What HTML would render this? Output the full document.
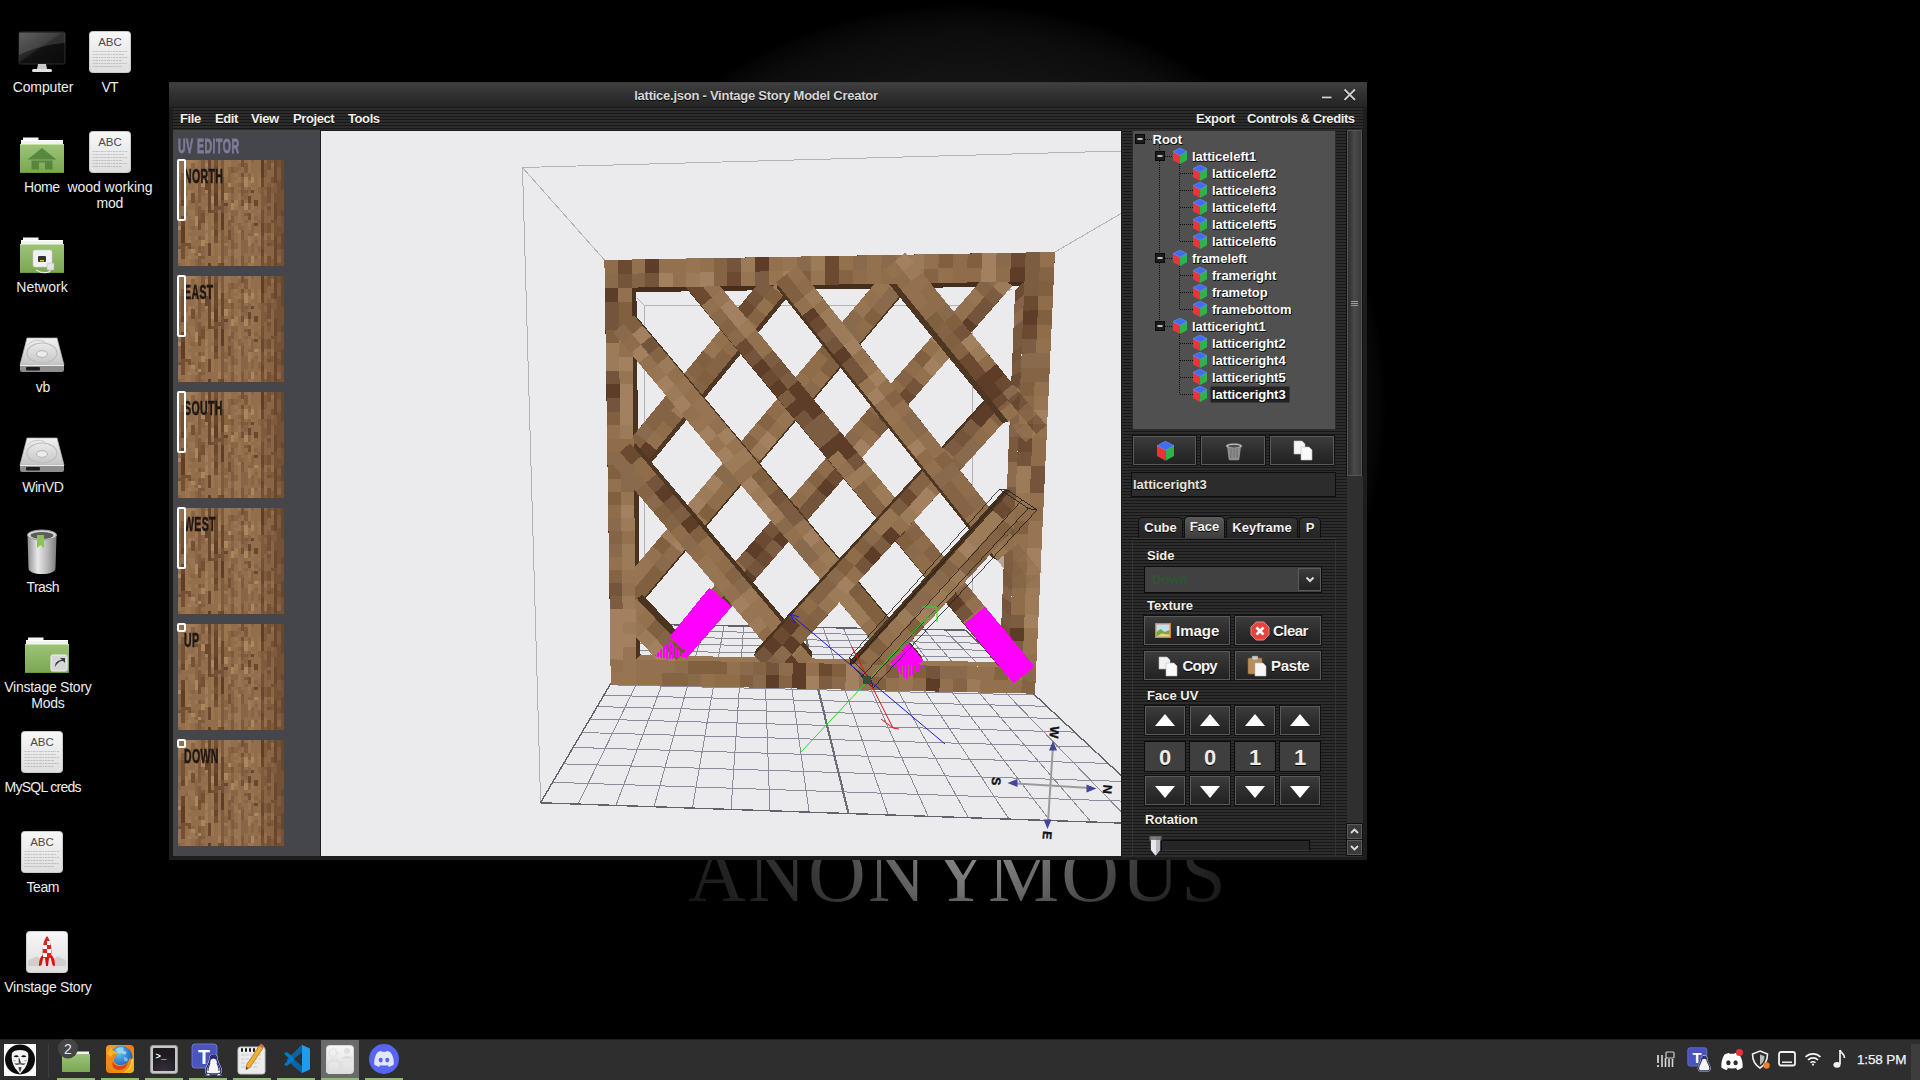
<!DOCTYPE html>
<html lang="en"><head><meta charset="utf-8"><title>lattice.json - Vintage Story Model Creator</title>
<style>
*{box-sizing:border-box;margin:0;padding:0}
html,body{width:1920px;height:1080px;overflow:hidden;background:#000;font-family:"Liberation Sans",sans-serif}
body{position:relative;font-family:"Liberation Sans",sans-serif;color:#fff}
.abs{position:absolute}
#wall{position:absolute;left:0;top:0;width:1920px;height:1039px;background:radial-gradient(ellipse 424px 400px at 963px 404px,#1f1f1f 0%,#181818 60%,#131313 82%,#0c0c0c 93%,#050505 98%,#000 100%)}
#anon{position:absolute;left:688px;top:829px;width:560px;height:90px;font-family:"Liberation Serif",serif;font-size:80px;line-height:90px;letter-spacing:2.2px;white-space:nowrap;
 background:linear-gradient(90deg,#1c1c1c 0%,#3a3a3a 22%,#777 42%,#8a8a8a 52%,#6a6a6a 66%,#2e2e2e 85%,#181818 100%);-webkit-background-clip:text;background-clip:text;color:transparent}
#anonfade{position:absolute;left:660px;top:858px;width:620px;height:60px;background:linear-gradient(180deg,rgba(0,0,0,0) 0%,rgba(0,0,0,.15) 60%,rgba(0,0,0,.55) 100%)}
/* desktop icons */
.dlabel{position:absolute;font-size:14px;line-height:16px;color:#ededed;text-align:center;white-space:nowrap;text-shadow:0 1px 2px #000;transform:translateX(-50%)}
/* window */
#win{position:absolute;left:169px;top:82px;width:1198px;height:778px;background:#1d1d1d}
#title{position:absolute;left:0;top:0;width:1198px;height:25px;background:linear-gradient(180deg,#404040 0%,#343434 35%,#242424 100%);border-top:1px solid #3a3a3a}
#title .t{position:absolute;left:0;width:1174px;top:4.5px;text-align:center;font-weight:bold;font-size:13px;line-height:16px;letter-spacing:-.25px;color:#d6d6d6;text-shadow:0 1px 0 #000}
#menubar{position:absolute;left:4px;top:25px;width:1190px;height:23px;background:repeating-linear-gradient(180deg,#171717 0,#171717 1px,#2c2c2c 1px,#2c2c2c 3px)}
.mi{position:absolute;top:4px;font-weight:bold;font-size:13px;line-height:16px;letter-spacing:-.4px;color:#f2efe8;text-shadow:0 1px 0 #000;white-space:nowrap}
#uv{position:absolute;left:4px;top:48px;width:147px;height:726px;background:#45464b}
#uvt{position:absolute;left:5px;top:4.500px;font-weight:bold;font-size:21px;line-height:22px;color:#7c7d9b;-webkit-text-stroke:.8px #7c7d9b;transform:scaleX(.5);transform-origin:0 0;white-space:nowrap;letter-spacing:1px}
.th{position:absolute;left:5px;width:106px;height:106px;background:#8a6a4c;overflow:hidden}
.thl{position:absolute;font-weight:bold;font-size:21px;line-height:20px;color:#1e1712;-webkit-text-stroke:.6px #1e1712;letter-spacing:.8px;transform:scaleX(.5);transform-origin:0 0;white-space:nowrap}
.sel{position:absolute;border:2px solid #fff;border-radius:2px}
#vp{position:absolute;left:152px;top:49px;width:800px;height:725px;background:#ebebed;overflow:hidden}
#rp{position:absolute;left:953px;top:48px;width:241px;height:727px;background:repeating-linear-gradient(180deg,#2c2c2c 0,#2c2c2c 1px,#171717 1px,#171717 2px,#2c2c2c 2px,#2c2c2c 3px);overflow:hidden}
#tree{position:absolute;left:10px;top:0px;width:204px;height:300px;background:#505050;border:1px solid #2c2c2c}
.tr{margin-top:1px;position:absolute;font-weight:bold;font-size:13px;line-height:17px;color:#fff;text-shadow:1px 1px 0 #111,0 1px 0 #111;white-space:nowrap}
.btn{position:absolute;border:1px solid #5a5a5a;background:linear-gradient(180deg,#3c3c3c 0%,#2c2c2c 55%,#222 100%);box-shadow:0 0 0 1px #111}
.lbl{margin-top:1px;position:absolute;font-weight:bold;font-size:13px;line-height:16px;color:#f4efe6;text-shadow:0 1px 0 #000;white-space:nowrap}
.tab{position:absolute;top:469px;height:22px;border:1px solid #0e0e0e;border-bottom:none;border-radius:5px 5px 0 0;background:linear-gradient(180deg,#333 0%,#242424 100%);font-weight:bold;font-size:13px;line-height:20px;text-align:center;color:#f2f2f2;text-shadow:0 1px 0 #000}
.tab.on{top:468px;height:23px;background:linear-gradient(180deg,#5a5a5a 0%,#3c3c3c 100%)}
.num{position:absolute;width:43px;height:32px;top:693px;background:#3f3f3f;border:1px solid #0c0c0c;font-weight:bold;font-size:22px;line-height:31px;text-align:center;color:#f0ece4;text-shadow:0 1px 0 #000}
/* taskbar */
#tb{position:absolute;left:0;top:1039px;width:1920px;height:41px;background:#2e2e2e;border-top:1px solid #1f1f1f}
.ul{position:absolute;top:38px;height:3px;background:#92ba70}
</style></head><body>
<div id="wall"></div>
<div id="anon">ANON<span style="margin-left:4px;margin-right:-4px">Y</span>MOUS</div><div id="anonfade"></div>
<svg width="0" height="0" style="position:absolute"><defs>
<linearGradient id="gDoc" x1="0" y1="0" x2="0" y2="1"><stop offset="0" stop-color="#f7f7f7"/><stop offset="1" stop-color="#dedede"/></linearGradient>
<linearGradient id="gFol" x1="0" y1="0" x2="0" y2="1"><stop offset="0" stop-color="#9dc479"/><stop offset="1" stop-color="#7aa651"/></linearGradient>
<linearGradient id="gMon" x1="0" y1="0" x2="1" y2="1"><stop offset="0" stop-color="#4a4a4a"/><stop offset=".45" stop-color="#262626"/><stop offset=".5" stop-color="#111"/><stop offset="1" stop-color="#0a0a0a"/></linearGradient>
<linearGradient id="gDrv" x1="0" y1="0" x2="0" y2="1"><stop offset="0" stop-color="#f2f2f2"/><stop offset="1" stop-color="#c4c4c4"/></linearGradient>
<linearGradient id="gCan" x1="0" y1="0" x2="1" y2="0"><stop offset="0" stop-color="#8c8c8c"/><stop offset=".35" stop-color="#e9e9e9"/><stop offset=".7" stop-color="#b5b5b5"/><stop offset="1" stop-color="#7a7a7a"/></linearGradient>
<symbol id="doc" viewBox="0 0 42 42"><rect x=".5" y=".5" width="41" height="41" rx="3" fill="url(#gDoc)" stroke="#c9c9c9"/>
<text x="21" y="14.5" font-family="Liberation Sans,sans-serif" font-size="11.5" fill="#4a4a4a" text-anchor="middle">ABC</text>
<g stroke="#8e8e8e" stroke-width=".7" stroke-dasharray="2 .7 3 .7 1.500 .7 2.500 .7" opacity=".6"><path d="M3.500 20.500h35M3.500 23.500h32M3.500 26.500h35M3.500 29.500h30M3.500 32.500h34M3.500 35.500h29"/></g></symbol>
<symbol id="fol" viewBox="0 0 46 38"><path d="M4 1.500h15.500v4H4z" fill="#f6f6f6"/><path d="M2 4.500h42v5H2z" fill="#f2f2f2"/><path d="M2 4.500h42" stroke="#fff" stroke-width="1"/><path d="M1 8h44v28a1 1 0 0 1-1 1H2a1 1 0 0 1-1-1z" fill="url(#gFol)"/><path d="M1 8.5h44" stroke="#c3e2a3" stroke-width="1"/><path d="M1 36.5h44" stroke="#699a42" stroke-width="1"/></symbol>
<symbol id="drv" viewBox="0 0 46 36"><path d="M8 1h30l7 27H1z" fill="url(#gDrv)" stroke="#b4b4b4" stroke-width=".7"/><ellipse cx="23" cy="16" rx="15" ry="10" fill="none" stroke="#bdbdbd" stroke-width="1.200"/><ellipse cx="23" cy="17" rx="5.500" ry="3.300" fill="#ececec" stroke="#b5b5b5"/><path d="M9 8c3-5 12-6 17-3" fill="none" stroke="#c6c6c6"/><path d="M1 28h44v5a2 2 0 0 1-2 2H3a2 2 0 0 1-2-2z" fill="#8e8e8e"/><rect x="7" y="30" width="14" height="3.500" rx="1" fill="#1c1c1c"/><path d="M1 28.500h44" stroke="#eee"/></symbol>
</defs></svg>
<!-- Computer -->
<svg class="abs" style="left:18px;top:31px" width="48" height="43" viewBox="0 0 48 43"><rect x="1" y="1" width="46" height="32" rx="1.5" fill="url(#gMon)" stroke="#2e2e2e"/><path d="M1 2L47 2L47 12C30 13 14 18 1 24Z" fill="#fff" opacity=".13"/><path d="M20 33h8l1 5h-10z" fill="#c9c9c9"/><rect x="14" y="38" width="20" height="3" rx="1.5" fill="#e2e2e2"/></svg>
<div class="dlabel" style="left:43px;top:79px"><span style="letter-spacing:-0.12px;margin-right:0.12px">Computer</span></div>
<svg class="abs" style="left:89px;top:31px" width="42" height="42"><use href="#doc"/></svg>
<div class="dlabel" style="left:110px;top:79px"><span style="letter-spacing:-0.94px;margin-right:0.94px">VT</span></div>
<!-- Home -->
<svg class="abs" style="left:19px;top:136px" width="46" height="38" viewBox="0 0 46 38"><use href="#fol"/><path d="M23 12L8.500 23.500h29z" fill="#4f7f3a" opacity=".85"/><path d="M12.500 24.500h21v9h-7.500v-7h-6v7h-7.500z" fill="#4f7f3a" opacity=".85"/></svg>
<div class="dlabel" style="left:42px;top:179px"><span style="letter-spacing:-0.40px;margin-right:0.40px">Home</span></div>
<svg class="abs" style="left:89px;top:131px" width="42" height="42"><use href="#doc"/></svg>
<div class="dlabel" style="left:110px;top:179px"><span style="letter-spacing:-0.05px;margin-right:0.05px">wood working</span><br><span style="letter-spacing:-0.24px;margin-right:0.24px">mod</span></div>
<!-- Network -->
<svg class="abs" style="left:19px;top:236px" width="46" height="38" viewBox="0 0 46 38"><use href="#fol"/><rect x="14" y="14" width="19" height="17" rx="2" fill="#f1f1f1" stroke="#cfcfcf" stroke-width=".6"/><rect x="19" y="20" width="8" height="6" rx="1" fill="#333"/><rect x="21" y="24" width="4" height="1.4" fill="#e9c94a"/><rect x="28" y="27" width="7" height="7" rx="1" fill="#e4e4e4" stroke="#b5b5b5" stroke-width=".5"/><path d="M31 34c1 3-8 4-14 0" stroke="#e6e6e6" fill="none" stroke-width="1.300"/></svg>
<div class="dlabel" style="left:42px;top:279px"><span style="letter-spacing:-0.01px;margin-right:0.01px">Network</span></div>
<svg class="abs" style="left:19px;top:337px" width="46" height="36"><use href="#drv"/></svg>
<div class="dlabel" style="left:43px;top:379px"><span style="letter-spacing:-0.27px;margin-right:0.27px">vb</span></div>
<svg class="abs" style="left:19px;top:437px" width="46" height="36"><use href="#drv"/></svg>
<div class="dlabel" style="left:43px;top:479px"><span style="letter-spacing:-0.46px;margin-right:0.46px">WinVD</span></div>
<!-- Trash -->
<svg class="abs" style="left:26px;top:529px" width="32" height="46" viewBox="0 0 32 46"><path d="M1.500 6h29l-1 33c0 4-6 6-13.500 6S2.500 43 2.500 39z" fill="url(#gCan)"/><ellipse cx="16" cy="6" rx="14.5" ry="5" fill="#d9d9d9" stroke="#9a9a9a"/><ellipse cx="16" cy="6.5" rx="11.5" ry="3.4" fill="#5c5c5c"/><path d="M11 6h7v13l-3.5-3L11 19z" fill="#8ec252"/></svg>
<div class="dlabel" style="left:43px;top:579px"><span style="letter-spacing:-0.55px;margin-right:0.55px">Trash</span></div>
<!-- Vinstage Story Mods -->
<svg class="abs" style="left:24px;top:636px" width="46" height="38" viewBox="0 0 46 38"><use href="#fol"/><rect x="27" y="19" width="16" height="16" rx="1.5" fill="#d7d7d7" stroke="#f3f3f3"/><path d="M31 31c0-5 3-7 7-7l-2-2h5v5l-2-2c-3 0-5 1-8 6z" fill="#3c3c3c"/></svg>
<div class="dlabel" style="left:48px;top:679px"><span style="letter-spacing:-0.24px;margin-right:0.24px">Vinstage Story</span><br><span style="letter-spacing:-0.25px;margin-right:0.25px">Mods</span></div>
<svg class="abs" style="left:21px;top:731px" width="42" height="42"><use href="#doc"/></svg>
<div class="dlabel" style="left:43px;top:779px"><span style="letter-spacing:-0.73px;margin-right:0.73px">MySQL creds</span></div>
<svg class="abs" style="left:21px;top:831px" width="42" height="42"><use href="#doc"/></svg>
<div class="dlabel" style="left:43px;top:879px"><span style="letter-spacing:-0.43px;margin-right:0.43px">Team</span></div>
<!-- Vinstage Story rocket -->
<svg class="abs" style="left:26px;top:931px" width="42" height="42" viewBox="0 0 42 42"><rect x=".5" y=".5" width="41" height="41" rx="3" fill="url(#gDoc)" stroke="#cfcfcf"/><path d="M2 30c3-4 6-2 8-5 2 1 3 3 5 2v8H2zM40 30c-3-4-6-2-8-5-2 1-3 3-5 2v8h13z" fill="#c9c9c9" opacity=".8"/><path d="M21 5c4 5 5 12 4 22h-8c-1-10 0-17 4-22z" fill="#e01e1e"/><path d="M17 14h4v4h-4zM21 18h4v4h-4zM17 22h4v4h-4zM21 10h3.5v4H21z" fill="#fff"/><path d="M17 24c-3 2-4 6-4 11 2 0 3-1 3-3l1-4zM25 24c3 2 4 6 4 11-2 0-3-1-3-3l-1-4z" fill="#d11"/><path d="M19 27h4l-1 8h-2z" fill="#c11"/></svg>
<div class="dlabel" style="left:48px;top:979px"><span style="letter-spacing:-0.24px;margin-right:0.24px">Vinstage Story</span></div>
<div id="win">
<div id="title"><div class="t">lattice.json - Vintage Story Model Creator</div>
<svg class="abs" style="left:1148px;top:3px" width="44" height="18" viewBox="0 0 44 18"><path d="M5 12.500h9.500" stroke="#0c0c0c" stroke-width="2"/><path d="M5 11.500h9.500" stroke="#d2d2d2" stroke-width="1.800"/><path d="M27.500 4.500l10.500 10.500M38 4.500L27.500 15" stroke="#0c0c0c" stroke-width="2"/><path d="M27.500 3.500l10.500 10.500M38 3.500L27.500 14" stroke="#cdcdcd" stroke-width="1.900"/></svg></div>
<div id="menubar">
<div class="mi" style="left:7px">File</div><div class="mi" style="left:42px">Edit</div><div class="mi" style="left:78px">View</div><div class="mi" style="left:120px">Project</div><div class="mi" style="left:175px">Tools</div>
<div class="mi" style="left:1023px">Export</div><div class="mi" style="left:1074px">Controls &amp; Credits</div>
</div>
<div id="uv"><div id="uvt">UV EDITOR</div>
<svg width="0" height="0" style="position:absolute"><defs><symbol id="wood" viewBox="0 0 32 32"><rect x="0" y="0" width="1.03" height="3.03" fill="#9b7551"/><rect x="0" y="3" width="1.03" height="1.03" fill="#9b7551"/><rect x="0" y="4" width="1.03" height="1.03" fill="#9b7551"/><rect x="0" y="5" width="1.03" height="1.03" fill="#936e4c"/><rect x="0" y="6" width="1.03" height="3.03" fill="#8a6545"/><rect x="0" y="9" width="1.03" height="2.03" fill="#8a6545"/><rect x="0" y="11" width="1.03" height="2.03" fill="#936e4c"/><rect x="0" y="13" width="1.03" height="1.03" fill="#8a6545"/><rect x="0" y="14" width="1.03" height="1.03" fill="#8a6545"/><rect x="0" y="15" width="1.03" height="3.03" fill="#936e4c"/><rect x="0" y="18" width="1.03" height="1.03" fill="#9b7551"/><rect x="0" y="19" width="1.03" height="1.03" fill="#936e4c"/><rect x="0" y="20" width="1.03" height="1.03" fill="#ac865e"/><rect x="0" y="21" width="1.03" height="1.03" fill="#8a6545"/><rect x="0" y="22" width="1.03" height="3.03" fill="#8a6545"/><rect x="0" y="25" width="1.03" height="1.03" fill="#8a6545"/><rect x="0" y="26" width="1.03" height="1.03" fill="#745035"/><rect x="0" y="27" width="1.03" height="2.03" fill="#9b7551"/><rect x="0" y="29" width="1.03" height="2.03" fill="#9b7551"/><rect x="0" y="31" width="1.03" height="1.03" fill="#8a6545"/><rect x="1" y="0" width="1.03" height="4.03" fill="#936e4c"/><rect x="1" y="4" width="1.03" height="2.03" fill="#7f5a3d"/><rect x="1" y="6" width="1.03" height="3.03" fill="#745035"/><rect x="1" y="9" width="1.03" height="3.03" fill="#745035"/><rect x="1" y="12" width="1.03" height="2.03" fill="#69472d"/><rect x="1" y="14" width="1.03" height="3.03" fill="#936e4c"/><rect x="1" y="17" width="1.03" height="3.03" fill="#69472d"/><rect x="1" y="20" width="1.03" height="5.03" fill="#5f3e26"/><rect x="1" y="25" width="1.03" height="5.03" fill="#745035"/><rect x="1" y="30" width="1.03" height="2.03" fill="#936e4c"/><rect x="2" y="0" width="1.03" height="1.03" fill="#a37d57"/><rect x="2" y="1" width="1.03" height="1.03" fill="#a37d57"/><rect x="2" y="2" width="1.03" height="1.03" fill="#9b7551"/><rect x="2" y="3" width="1.03" height="2.03" fill="#936e4c"/><rect x="2" y="5" width="1.03" height="1.03" fill="#9b7551"/><rect x="2" y="6" width="1.03" height="2.03" fill="#9b7551"/><rect x="2" y="8" width="1.03" height="2.03" fill="#936e4c"/><rect x="2" y="10" width="1.03" height="1.03" fill="#936e4c"/><rect x="2" y="11" width="1.03" height="3.03" fill="#a37d57"/><rect x="2" y="14" width="1.03" height="2.03" fill="#936e4c"/><rect x="2" y="16" width="1.03" height="1.03" fill="#8a6545"/><rect x="2" y="17" width="1.03" height="2.03" fill="#9b7551"/><rect x="2" y="19" width="1.03" height="3.03" fill="#9b7551"/><rect x="2" y="22" width="1.03" height="3.03" fill="#9b7551"/><rect x="2" y="25" width="1.03" height="1.03" fill="#745035"/><rect x="2" y="26" width="1.03" height="3.03" fill="#936e4c"/><rect x="2" y="29" width="1.03" height="3.03" fill="#9b7551"/><rect x="3" y="0" width="1.03" height="1.03" fill="#a37d57"/><rect x="3" y="1" width="1.03" height="2.03" fill="#a37d57"/><rect x="3" y="3" width="1.03" height="2.03" fill="#a37d57"/><rect x="3" y="5" width="1.03" height="2.03" fill="#936e4c"/><rect x="3" y="7" width="1.03" height="2.03" fill="#936e4c"/><rect x="3" y="9" width="1.03" height="3.03" fill="#a37d57"/><rect x="3" y="12" width="1.03" height="3.03" fill="#936e4c"/><rect x="3" y="15" width="1.03" height="2.03" fill="#9b7551"/><rect x="3" y="17" width="1.03" height="3.03" fill="#936e4c"/><rect x="3" y="20" width="1.03" height="1.03" fill="#936e4c"/><rect x="3" y="21" width="1.03" height="1.03" fill="#9b7551"/><rect x="3" y="22" width="1.03" height="1.03" fill="#936e4c"/><rect x="3" y="23" width="1.03" height="1.03" fill="#9b7551"/><rect x="3" y="24" width="1.03" height="1.03" fill="#a37d57"/><rect x="3" y="25" width="1.03" height="2.03" fill="#745035"/><rect x="3" y="27" width="1.03" height="2.03" fill="#9b7551"/><rect x="3" y="29" width="1.03" height="1.03" fill="#a37d57"/><rect x="3" y="30" width="1.03" height="2.03" fill="#9b7551"/><rect x="4" y="0" width="1.03" height="1.03" fill="#a37d57"/><rect x="4" y="1" width="1.03" height="3.03" fill="#8a6545"/><rect x="4" y="4" width="1.03" height="2.03" fill="#9b7551"/><rect x="4" y="6" width="1.03" height="2.03" fill="#936e4c"/><rect x="4" y="8" width="1.03" height="1.03" fill="#936e4c"/><rect x="4" y="9" width="1.03" height="1.03" fill="#9b7551"/><rect x="4" y="10" width="1.03" height="2.03" fill="#745035"/><rect x="4" y="12" width="1.03" height="1.03" fill="#745035"/><rect x="4" y="13" width="1.03" height="1.03" fill="#936e4c"/><rect x="4" y="14" width="1.03" height="1.03" fill="#936e4c"/><rect x="4" y="15" width="1.03" height="2.03" fill="#9b7551"/><rect x="4" y="17" width="1.03" height="1.03" fill="#9b7551"/><rect x="4" y="18" width="1.03" height="2.03" fill="#936e4c"/><rect x="4" y="20" width="1.03" height="1.03" fill="#8a6545"/><rect x="4" y="21" width="1.03" height="3.03" fill="#936e4c"/><rect x="4" y="24" width="1.03" height="2.03" fill="#936e4c"/><rect x="4" y="26" width="1.03" height="1.03" fill="#8a6545"/><rect x="4" y="27" width="1.03" height="1.03" fill="#ac865e"/><rect x="4" y="28" width="1.03" height="2.03" fill="#9b7551"/><rect x="4" y="30" width="1.03" height="2.03" fill="#936e4c"/><rect x="5" y="0" width="1.03" height="1.03" fill="#9b7551"/><rect x="5" y="1" width="1.03" height="1.03" fill="#9b7551"/><rect x="5" y="2" width="1.03" height="1.03" fill="#936e4c"/><rect x="5" y="3" width="1.03" height="1.03" fill="#936e4c"/><rect x="5" y="4" width="1.03" height="1.03" fill="#936e4c"/><rect x="5" y="5" width="1.03" height="1.03" fill="#8a6545"/><rect x="5" y="6" width="1.03" height="1.03" fill="#745035"/><rect x="5" y="7" width="1.03" height="2.03" fill="#9b7551"/><rect x="5" y="9" width="1.03" height="1.03" fill="#936e4c"/><rect x="5" y="10" width="1.03" height="1.03" fill="#9b7551"/><rect x="5" y="11" width="1.03" height="1.03" fill="#936e4c"/><rect x="5" y="12" width="1.03" height="2.03" fill="#8a6545"/><rect x="5" y="14" width="1.03" height="3.03" fill="#8a6545"/><rect x="5" y="17" width="1.03" height="3.03" fill="#ac865e"/><rect x="5" y="20" width="1.03" height="3.03" fill="#936e4c"/><rect x="5" y="23" width="1.03" height="1.03" fill="#9b7551"/><rect x="5" y="24" width="1.03" height="2.03" fill="#936e4c"/><rect x="5" y="26" width="1.03" height="2.03" fill="#936e4c"/><rect x="5" y="28" width="1.03" height="1.03" fill="#8a6545"/><rect x="5" y="29" width="1.03" height="1.03" fill="#9b7551"/><rect x="5" y="30" width="1.03" height="2.03" fill="#8a6545"/><rect x="6" y="0" width="1.03" height="1.03" fill="#936e4c"/><rect x="6" y="1" width="1.03" height="2.03" fill="#936e4c"/><rect x="6" y="3" width="1.03" height="2.03" fill="#7f5a3d"/><rect x="6" y="5" width="1.03" height="1.03" fill="#936e4c"/><rect x="6" y="6" width="1.03" height="3.03" fill="#7f5a3d"/><rect x="6" y="9" width="1.03" height="1.03" fill="#7f5a3d"/><rect x="6" y="10" width="1.03" height="1.03" fill="#7f5a3d"/><rect x="6" y="11" width="1.03" height="2.03" fill="#7f5a3d"/><rect x="6" y="13" width="1.03" height="1.03" fill="#936e4c"/><rect x="6" y="14" width="1.03" height="2.03" fill="#7f5a3d"/><rect x="6" y="16" width="1.03" height="1.03" fill="#7f5a3d"/><rect x="6" y="17" width="1.03" height="1.03" fill="#7f5a3d"/><rect x="6" y="18" width="1.03" height="3.03" fill="#745035"/><rect x="6" y="21" width="1.03" height="2.03" fill="#936e4c"/><rect x="6" y="23" width="1.03" height="1.03" fill="#7f5a3d"/><rect x="6" y="24" width="1.03" height="2.03" fill="#936e4c"/><rect x="6" y="26" width="1.03" height="1.03" fill="#7f5a3d"/><rect x="6" y="27" width="1.03" height="1.03" fill="#7f5a3d"/><rect x="6" y="28" width="1.03" height="1.03" fill="#ac865e"/><rect x="6" y="29" width="1.03" height="1.03" fill="#7f5a3d"/><rect x="6" y="30" width="1.03" height="2.03" fill="#7f5a3d"/><rect x="7" y="0" width="1.03" height="3.03" fill="#7f5a3d"/><rect x="7" y="3" width="1.03" height="1.03" fill="#936e4c"/><rect x="7" y="4" width="1.03" height="1.03" fill="#936e4c"/><rect x="7" y="5" width="1.03" height="1.03" fill="#8a6545"/><rect x="7" y="6" width="1.03" height="2.03" fill="#ac865e"/><rect x="7" y="8" width="1.03" height="3.03" fill="#8a6545"/><rect x="7" y="11" width="1.03" height="2.03" fill="#936e4c"/><rect x="7" y="13" width="1.03" height="1.03" fill="#936e4c"/><rect x="7" y="14" width="1.03" height="1.03" fill="#936e4c"/><rect x="7" y="15" width="1.03" height="1.03" fill="#7f5a3d"/><rect x="7" y="16" width="1.03" height="3.03" fill="#745035"/><rect x="7" y="19" width="1.03" height="2.03" fill="#936e4c"/><rect x="7" y="21" width="1.03" height="1.03" fill="#936e4c"/><rect x="7" y="22" width="1.03" height="1.03" fill="#936e4c"/><rect x="7" y="23" width="1.03" height="1.03" fill="#8a6545"/><rect x="7" y="24" width="1.03" height="2.03" fill="#ac865e"/><rect x="7" y="26" width="1.03" height="3.03" fill="#8a6545"/><rect x="7" y="29" width="1.03" height="1.03" fill="#7f5a3d"/><rect x="7" y="30" width="1.03" height="1.03" fill="#936e4c"/><rect x="7" y="31" width="1.03" height="1.03" fill="#8a6545"/><rect x="8" y="0" width="1.03" height="1.03" fill="#936e4c"/><rect x="8" y="1" width="1.03" height="1.03" fill="#a37d57"/><rect x="8" y="2" width="1.03" height="1.03" fill="#9b7551"/><rect x="8" y="3" width="1.03" height="2.03" fill="#936e4c"/><rect x="8" y="5" width="1.03" height="1.03" fill="#9b7551"/><rect x="8" y="6" width="1.03" height="3.03" fill="#69472d"/><rect x="8" y="9" width="1.03" height="1.03" fill="#a37d57"/><rect x="8" y="10" width="1.03" height="1.03" fill="#936e4c"/><rect x="8" y="11" width="1.03" height="1.03" fill="#936e4c"/><rect x="8" y="12" width="1.03" height="2.03" fill="#936e4c"/><rect x="8" y="14" width="1.03" height="1.03" fill="#9b7551"/><rect x="8" y="15" width="1.03" height="1.03" fill="#936e4c"/><rect x="8" y="16" width="1.03" height="1.03" fill="#936e4c"/><rect x="8" y="17" width="1.03" height="1.03" fill="#9b7551"/><rect x="8" y="18" width="1.03" height="1.03" fill="#9b7551"/><rect x="8" y="19" width="1.03" height="2.03" fill="#a37d57"/><rect x="8" y="21" width="1.03" height="1.03" fill="#9b7551"/><rect x="8" y="22" width="1.03" height="3.03" fill="#a37d57"/><rect x="8" y="25" width="1.03" height="2.03" fill="#936e4c"/><rect x="8" y="27" width="1.03" height="3.03" fill="#936e4c"/><rect x="8" y="30" width="1.03" height="2.03" fill="#936e4c"/><rect x="9" y="0" width="1.03" height="3.03" fill="#69472d"/><rect x="9" y="3" width="1.03" height="3.03" fill="#745035"/><rect x="9" y="6" width="1.03" height="2.03" fill="#69472d"/><rect x="9" y="8" width="1.03" height="3.03" fill="#69472d"/><rect x="9" y="11" width="1.03" height="5.03" fill="#69472d"/><rect x="9" y="16" width="1.03" height="2.03" fill="#936e4c"/><rect x="9" y="18" width="1.03" height="4.03" fill="#936e4c"/><rect x="9" y="22" width="1.03" height="3.03" fill="#936e4c"/><rect x="9" y="25" width="1.03" height="4.03" fill="#69472d"/><rect x="9" y="29" width="1.03" height="2.03" fill="#936e4c"/><rect x="9" y="31" width="1.03" height="1.03" fill="#5f3e26"/><rect x="10" y="0" width="1.03" height="2.03" fill="#936e4c"/><rect x="10" y="2" width="1.03" height="2.03" fill="#936e4c"/><rect x="10" y="4" width="1.03" height="2.03" fill="#9b7551"/><rect x="10" y="6" width="1.03" height="3.03" fill="#9b7551"/><rect x="10" y="9" width="1.03" height="2.03" fill="#936e4c"/><rect x="10" y="11" width="1.03" height="2.03" fill="#ac865e"/><rect x="10" y="13" width="1.03" height="2.03" fill="#9b7551"/><rect x="10" y="15" width="1.03" height="1.03" fill="#745035"/><rect x="10" y="16" width="1.03" height="1.03" fill="#9b7551"/><rect x="10" y="17" width="1.03" height="1.03" fill="#9b7551"/><rect x="10" y="18" width="1.03" height="2.03" fill="#9b7551"/><rect x="10" y="20" width="1.03" height="1.03" fill="#936e4c"/><rect x="10" y="21" width="1.03" height="2.03" fill="#a37d57"/><rect x="10" y="23" width="1.03" height="3.03" fill="#9b7551"/><rect x="10" y="26" width="1.03" height="1.03" fill="#9b7551"/><rect x="10" y="27" width="1.03" height="2.03" fill="#9b7551"/><rect x="10" y="29" width="1.03" height="1.03" fill="#936e4c"/><rect x="10" y="30" width="1.03" height="2.03" fill="#936e4c"/><rect x="11" y="0" width="1.03" height="2.03" fill="#745035"/><rect x="11" y="2" width="1.03" height="5.03" fill="#69472d"/><rect x="11" y="7" width="1.03" height="3.03" fill="#69472d"/><rect x="11" y="10" width="1.03" height="4.03" fill="#5f3e26"/><rect x="11" y="14" width="1.03" height="2.03" fill="#745035"/><rect x="11" y="16" width="1.03" height="3.03" fill="#69472d"/><rect x="11" y="19" width="1.03" height="2.03" fill="#745035"/><rect x="11" y="21" width="1.03" height="2.03" fill="#69472d"/><rect x="11" y="23" width="1.03" height="2.03" fill="#745035"/><rect x="11" y="25" width="1.03" height="5.03" fill="#936e4c"/><rect x="11" y="30" width="1.03" height="2.03" fill="#936e4c"/><rect x="12" y="0" width="1.03" height="1.03" fill="#936e4c"/><rect x="12" y="1" width="1.03" height="1.03" fill="#936e4c"/><rect x="12" y="2" width="1.03" height="2.03" fill="#9b7551"/><rect x="12" y="4" width="1.03" height="3.03" fill="#a37d57"/><rect x="12" y="7" width="1.03" height="1.03" fill="#936e4c"/><rect x="12" y="8" width="1.03" height="1.03" fill="#936e4c"/><rect x="12" y="9" width="1.03" height="3.03" fill="#9b7551"/><rect x="12" y="12" width="1.03" height="2.03" fill="#936e4c"/><rect x="12" y="14" width="1.03" height="1.03" fill="#745035"/><rect x="12" y="15" width="1.03" height="3.03" fill="#936e4c"/><rect x="12" y="18" width="1.03" height="1.03" fill="#936e4c"/><rect x="12" y="19" width="1.03" height="3.03" fill="#936e4c"/><rect x="12" y="22" width="1.03" height="2.03" fill="#9b7551"/><rect x="12" y="24" width="1.03" height="1.03" fill="#936e4c"/><rect x="12" y="25" width="1.03" height="2.03" fill="#9b7551"/><rect x="12" y="27" width="1.03" height="1.03" fill="#9b7551"/><rect x="12" y="28" width="1.03" height="1.03" fill="#9b7551"/><rect x="12" y="29" width="1.03" height="2.03" fill="#a37d57"/><rect x="12" y="31" width="1.03" height="1.03" fill="#745035"/><rect x="13" y="0" width="1.03" height="5.03" fill="#7f5a3d"/><rect x="13" y="5" width="1.03" height="2.03" fill="#69472d"/><rect x="13" y="7" width="1.03" height="5.03" fill="#69472d"/><rect x="13" y="12" width="1.03" height="4.03" fill="#745035"/><rect x="13" y="16" width="1.03" height="5.03" fill="#5f3e26"/><rect x="13" y="21" width="1.03" height="5.03" fill="#7f5a3d"/><rect x="13" y="26" width="1.03" height="5.03" fill="#7f5a3d"/><rect x="13" y="31" width="1.03" height="1.03" fill="#69472d"/><rect x="14" y="0" width="1.03" height="2.03" fill="#9b7551"/><rect x="14" y="2" width="1.03" height="1.03" fill="#9b7551"/><rect x="14" y="3" width="1.03" height="2.03" fill="#9b7551"/><rect x="14" y="5" width="1.03" height="2.03" fill="#936e4c"/><rect x="14" y="7" width="1.03" height="1.03" fill="#8a6545"/><rect x="14" y="8" width="1.03" height="2.03" fill="#8a6545"/><rect x="14" y="10" width="1.03" height="2.03" fill="#ac865e"/><rect x="14" y="12" width="1.03" height="1.03" fill="#936e4c"/><rect x="14" y="13" width="1.03" height="1.03" fill="#69472d"/><rect x="14" y="14" width="1.03" height="1.03" fill="#8a6545"/><rect x="14" y="15" width="1.03" height="1.03" fill="#8a6545"/><rect x="14" y="16" width="1.03" height="3.03" fill="#936e4c"/><rect x="14" y="19" width="1.03" height="2.03" fill="#936e4c"/><rect x="14" y="21" width="1.03" height="2.03" fill="#936e4c"/><rect x="14" y="23" width="1.03" height="1.03" fill="#8a6545"/><rect x="14" y="24" width="1.03" height="1.03" fill="#8a6545"/><rect x="14" y="25" width="1.03" height="1.03" fill="#9b7551"/><rect x="14" y="26" width="1.03" height="2.03" fill="#8a6545"/><rect x="14" y="28" width="1.03" height="1.03" fill="#8a6545"/><rect x="14" y="29" width="1.03" height="1.03" fill="#936e4c"/><rect x="14" y="30" width="1.03" height="1.03" fill="#9b7551"/><rect x="14" y="31" width="1.03" height="1.03" fill="#936e4c"/><rect x="15" y="0" width="1.03" height="2.03" fill="#9b7551"/><rect x="15" y="2" width="1.03" height="3.03" fill="#8a6545"/><rect x="15" y="5" width="1.03" height="2.03" fill="#8a6545"/><rect x="15" y="7" width="1.03" height="1.03" fill="#ac865e"/><rect x="15" y="8" width="1.03" height="2.03" fill="#8a6545"/><rect x="15" y="10" width="1.03" height="1.03" fill="#9b7551"/><rect x="15" y="11" width="1.03" height="1.03" fill="#936e4c"/><rect x="15" y="12" width="1.03" height="1.03" fill="#936e4c"/><rect x="15" y="13" width="1.03" height="3.03" fill="#936e4c"/><rect x="15" y="16" width="1.03" height="2.03" fill="#9b7551"/><rect x="15" y="18" width="1.03" height="2.03" fill="#7f5a3d"/><rect x="15" y="20" width="1.03" height="1.03" fill="#8a6545"/><rect x="15" y="21" width="1.03" height="3.03" fill="#745035"/><rect x="15" y="24" width="1.03" height="3.03" fill="#936e4c"/><rect x="15" y="27" width="1.03" height="2.03" fill="#9b7551"/><rect x="15" y="29" width="1.03" height="3.03" fill="#936e4c"/><rect x="16" y="0" width="1.03" height="2.03" fill="#936e4c"/><rect x="16" y="2" width="1.03" height="1.03" fill="#7f5a3d"/><rect x="16" y="3" width="1.03" height="1.03" fill="#7f5a3d"/><rect x="16" y="4" width="1.03" height="3.03" fill="#936e4c"/><rect x="16" y="7" width="1.03" height="1.03" fill="#936e4c"/><rect x="16" y="8" width="1.03" height="2.03" fill="#7f5a3d"/><rect x="16" y="10" width="1.03" height="2.03" fill="#8a6545"/><rect x="16" y="12" width="1.03" height="1.03" fill="#7f5a3d"/><rect x="16" y="13" width="1.03" height="2.03" fill="#ac865e"/><rect x="16" y="15" width="1.03" height="2.03" fill="#8a6545"/><rect x="16" y="17" width="1.03" height="2.03" fill="#7f5a3d"/><rect x="16" y="19" width="1.03" height="1.03" fill="#936e4c"/><rect x="16" y="20" width="1.03" height="1.03" fill="#8a6545"/><rect x="16" y="21" width="1.03" height="2.03" fill="#8a6545"/><rect x="16" y="23" width="1.03" height="1.03" fill="#8a6545"/><rect x="16" y="24" width="1.03" height="3.03" fill="#7f5a3d"/><rect x="16" y="27" width="1.03" height="2.03" fill="#8a6545"/><rect x="16" y="29" width="1.03" height="1.03" fill="#7f5a3d"/><rect x="16" y="30" width="1.03" height="1.03" fill="#7f5a3d"/><rect x="16" y="31" width="1.03" height="1.03" fill="#7f5a3d"/><rect x="17" y="0" width="1.03" height="2.03" fill="#936e4c"/><rect x="17" y="2" width="1.03" height="2.03" fill="#8a6545"/><rect x="17" y="4" width="1.03" height="1.03" fill="#9b7551"/><rect x="17" y="5" width="1.03" height="1.03" fill="#936e4c"/><rect x="17" y="6" width="1.03" height="1.03" fill="#9b7551"/><rect x="17" y="7" width="1.03" height="3.03" fill="#936e4c"/><rect x="17" y="10" width="1.03" height="2.03" fill="#936e4c"/><rect x="17" y="12" width="1.03" height="2.03" fill="#a37d57"/><rect x="17" y="14" width="1.03" height="1.03" fill="#9b7551"/><rect x="17" y="15" width="1.03" height="2.03" fill="#8a6545"/><rect x="17" y="17" width="1.03" height="3.03" fill="#936e4c"/><rect x="17" y="20" width="1.03" height="2.03" fill="#9b7551"/><rect x="17" y="22" width="1.03" height="3.03" fill="#936e4c"/><rect x="17" y="25" width="1.03" height="2.03" fill="#8a6545"/><rect x="17" y="27" width="1.03" height="3.03" fill="#9b7551"/><rect x="17" y="30" width="1.03" height="1.03" fill="#936e4c"/><rect x="17" y="31" width="1.03" height="1.03" fill="#936e4c"/><rect x="18" y="0" width="1.03" height="1.03" fill="#9b7551"/><rect x="18" y="1" width="1.03" height="2.03" fill="#8a6545"/><rect x="18" y="3" width="1.03" height="2.03" fill="#936e4c"/><rect x="18" y="5" width="1.03" height="2.03" fill="#9b7551"/><rect x="18" y="7" width="1.03" height="1.03" fill="#8a6545"/><rect x="18" y="8" width="1.03" height="1.03" fill="#936e4c"/><rect x="18" y="9" width="1.03" height="1.03" fill="#8a6545"/><rect x="18" y="10" width="1.03" height="2.03" fill="#9b7551"/><rect x="18" y="12" width="1.03" height="3.03" fill="#936e4c"/><rect x="18" y="15" width="1.03" height="1.03" fill="#9b7551"/><rect x="18" y="16" width="1.03" height="1.03" fill="#9b7551"/><rect x="18" y="17" width="1.03" height="2.03" fill="#9b7551"/><rect x="18" y="19" width="1.03" height="2.03" fill="#8a6545"/><rect x="18" y="21" width="1.03" height="1.03" fill="#a37d57"/><rect x="18" y="22" width="1.03" height="2.03" fill="#9b7551"/><rect x="18" y="24" width="1.03" height="1.03" fill="#9b7551"/><rect x="18" y="25" width="1.03" height="1.03" fill="#9b7551"/><rect x="18" y="26" width="1.03" height="2.03" fill="#9b7551"/><rect x="18" y="28" width="1.03" height="2.03" fill="#9b7551"/><rect x="18" y="30" width="1.03" height="2.03" fill="#9b7551"/><rect x="19" y="0" width="1.03" height="2.03" fill="#745035"/><rect x="19" y="2" width="1.03" height="2.03" fill="#936e4c"/><rect x="19" y="4" width="1.03" height="1.03" fill="#745035"/><rect x="19" y="5" width="1.03" height="2.03" fill="#8a6545"/><rect x="19" y="7" width="1.03" height="2.03" fill="#7f5a3d"/><rect x="19" y="9" width="1.03" height="2.03" fill="#7f5a3d"/><rect x="19" y="11" width="1.03" height="1.03" fill="#8a6545"/><rect x="19" y="12" width="1.03" height="2.03" fill="#745035"/><rect x="19" y="14" width="1.03" height="3.03" fill="#936e4c"/><rect x="19" y="17" width="1.03" height="1.03" fill="#936e4c"/><rect x="19" y="18" width="1.03" height="2.03" fill="#936e4c"/><rect x="19" y="20" width="1.03" height="1.03" fill="#8a6545"/><rect x="19" y="21" width="1.03" height="3.03" fill="#7f5a3d"/><rect x="19" y="24" width="1.03" height="2.03" fill="#8a6545"/><rect x="19" y="26" width="1.03" height="3.03" fill="#8a6545"/><rect x="19" y="29" width="1.03" height="3.03" fill="#7f5a3d"/><rect x="20" y="0" width="1.03" height="1.03" fill="#936e4c"/><rect x="20" y="1" width="1.03" height="3.03" fill="#7f5a3d"/><rect x="20" y="4" width="1.03" height="1.03" fill="#936e4c"/><rect x="20" y="5" width="1.03" height="3.03" fill="#ac865e"/><rect x="20" y="8" width="1.03" height="1.03" fill="#936e4c"/><rect x="20" y="9" width="1.03" height="1.03" fill="#7f5a3d"/><rect x="20" y="10" width="1.03" height="2.03" fill="#8a6545"/><rect x="20" y="12" width="1.03" height="1.03" fill="#936e4c"/><rect x="20" y="13" width="1.03" height="2.03" fill="#ac865e"/><rect x="20" y="15" width="1.03" height="1.03" fill="#936e4c"/><rect x="20" y="16" width="1.03" height="1.03" fill="#7f5a3d"/><rect x="20" y="17" width="1.03" height="1.03" fill="#936e4c"/><rect x="20" y="18" width="1.03" height="1.03" fill="#8a6545"/><rect x="20" y="19" width="1.03" height="2.03" fill="#936e4c"/><rect x="20" y="21" width="1.03" height="3.03" fill="#936e4c"/><rect x="20" y="24" width="1.03" height="2.03" fill="#8a6545"/><rect x="20" y="26" width="1.03" height="2.03" fill="#8a6545"/><rect x="20" y="28" width="1.03" height="1.03" fill="#936e4c"/><rect x="20" y="29" width="1.03" height="1.03" fill="#936e4c"/><rect x="20" y="30" width="1.03" height="1.03" fill="#936e4c"/><rect x="20" y="31" width="1.03" height="1.03" fill="#8a6545"/><rect x="21" y="0" width="1.03" height="1.03" fill="#9b7551"/><rect x="21" y="1" width="1.03" height="1.03" fill="#9b7551"/><rect x="21" y="2" width="1.03" height="2.03" fill="#9b7551"/><rect x="21" y="4" width="1.03" height="2.03" fill="#8a6545"/><rect x="21" y="6" width="1.03" height="2.03" fill="#9b7551"/><rect x="21" y="8" width="1.03" height="2.03" fill="#8a6545"/><rect x="21" y="10" width="1.03" height="1.03" fill="#936e4c"/><rect x="21" y="11" width="1.03" height="2.03" fill="#69472d"/><rect x="21" y="13" width="1.03" height="2.03" fill="#8a6545"/><rect x="21" y="15" width="1.03" height="1.03" fill="#9b7551"/><rect x="21" y="16" width="1.03" height="2.03" fill="#745035"/><rect x="21" y="18" width="1.03" height="1.03" fill="#936e4c"/><rect x="21" y="19" width="1.03" height="2.03" fill="#9b7551"/><rect x="21" y="21" width="1.03" height="1.03" fill="#936e4c"/><rect x="21" y="22" width="1.03" height="1.03" fill="#8a6545"/><rect x="21" y="23" width="1.03" height="1.03" fill="#a37d57"/><rect x="21" y="24" width="1.03" height="2.03" fill="#a37d57"/><rect x="21" y="26" width="1.03" height="3.03" fill="#936e4c"/><rect x="21" y="29" width="1.03" height="2.03" fill="#8a6545"/><rect x="21" y="31" width="1.03" height="1.03" fill="#9b7551"/><rect x="22" y="0" width="1.03" height="1.03" fill="#8a6545"/><rect x="22" y="1" width="1.03" height="3.03" fill="#936e4c"/><rect x="22" y="4" width="1.03" height="1.03" fill="#9b7551"/><rect x="22" y="5" width="1.03" height="2.03" fill="#ac865e"/><rect x="22" y="7" width="1.03" height="1.03" fill="#936e4c"/><rect x="22" y="8" width="1.03" height="1.03" fill="#9b7551"/><rect x="22" y="9" width="1.03" height="1.03" fill="#69472d"/><rect x="22" y="10" width="1.03" height="3.03" fill="#936e4c"/><rect x="22" y="13" width="1.03" height="1.03" fill="#9b7551"/><rect x="22" y="14" width="1.03" height="1.03" fill="#9b7551"/><rect x="22" y="15" width="1.03" height="1.03" fill="#936e4c"/><rect x="22" y="16" width="1.03" height="2.03" fill="#9b7551"/><rect x="22" y="18" width="1.03" height="1.03" fill="#9b7551"/><rect x="22" y="19" width="1.03" height="2.03" fill="#8a6545"/><rect x="22" y="21" width="1.03" height="2.03" fill="#8a6545"/><rect x="22" y="23" width="1.03" height="1.03" fill="#9b7551"/><rect x="22" y="24" width="1.03" height="1.03" fill="#9b7551"/><rect x="22" y="25" width="1.03" height="3.03" fill="#8a6545"/><rect x="22" y="28" width="1.03" height="1.03" fill="#936e4c"/><rect x="22" y="29" width="1.03" height="2.03" fill="#ac865e"/><rect x="22" y="31" width="1.03" height="1.03" fill="#9b7551"/><rect x="23" y="0" width="1.03" height="3.03" fill="#936e4c"/><rect x="23" y="3" width="1.03" height="1.03" fill="#936e4c"/><rect x="23" y="4" width="1.03" height="2.03" fill="#936e4c"/><rect x="23" y="6" width="1.03" height="2.03" fill="#936e4c"/><rect x="23" y="8" width="1.03" height="1.03" fill="#936e4c"/><rect x="23" y="9" width="1.03" height="3.03" fill="#936e4c"/><rect x="23" y="12" width="1.03" height="2.03" fill="#69472d"/><rect x="23" y="14" width="1.03" height="1.03" fill="#936e4c"/><rect x="23" y="15" width="1.03" height="2.03" fill="#936e4c"/><rect x="23" y="17" width="1.03" height="1.03" fill="#8a6545"/><rect x="23" y="18" width="1.03" height="1.03" fill="#936e4c"/><rect x="23" y="19" width="1.03" height="1.03" fill="#69472d"/><rect x="23" y="20" width="1.03" height="2.03" fill="#936e4c"/><rect x="23" y="22" width="1.03" height="1.03" fill="#ac865e"/><rect x="23" y="23" width="1.03" height="1.03" fill="#936e4c"/><rect x="23" y="24" width="1.03" height="1.03" fill="#8a6545"/><rect x="23" y="25" width="1.03" height="3.03" fill="#936e4c"/><rect x="23" y="28" width="1.03" height="1.03" fill="#936e4c"/><rect x="23" y="29" width="1.03" height="1.03" fill="#8a6545"/><rect x="23" y="30" width="1.03" height="2.03" fill="#936e4c"/><rect x="24" y="0" width="1.03" height="2.03" fill="#936e4c"/><rect x="24" y="2" width="1.03" height="1.03" fill="#936e4c"/><rect x="24" y="3" width="1.03" height="1.03" fill="#936e4c"/><rect x="24" y="4" width="1.03" height="2.03" fill="#9b7551"/><rect x="24" y="6" width="1.03" height="2.03" fill="#9b7551"/><rect x="24" y="8" width="1.03" height="1.03" fill="#8a6545"/><rect x="24" y="9" width="1.03" height="1.03" fill="#8a6545"/><rect x="24" y="10" width="1.03" height="3.03" fill="#936e4c"/><rect x="24" y="13" width="1.03" height="2.03" fill="#936e4c"/><rect x="24" y="15" width="1.03" height="1.03" fill="#9b7551"/><rect x="24" y="16" width="1.03" height="2.03" fill="#936e4c"/><rect x="24" y="18" width="1.03" height="1.03" fill="#8a6545"/><rect x="24" y="19" width="1.03" height="3.03" fill="#936e4c"/><rect x="24" y="22" width="1.03" height="1.03" fill="#9b7551"/><rect x="24" y="23" width="1.03" height="3.03" fill="#9b7551"/><rect x="24" y="26" width="1.03" height="2.03" fill="#8a6545"/><rect x="24" y="28" width="1.03" height="1.03" fill="#936e4c"/><rect x="24" y="29" width="1.03" height="1.03" fill="#9b7551"/><rect x="24" y="30" width="1.03" height="2.03" fill="#936e4c"/><rect x="25" y="0" width="1.03" height="5.03" fill="#5f3e26"/><rect x="25" y="5" width="1.03" height="3.03" fill="#69472d"/><rect x="25" y="8" width="1.03" height="3.03" fill="#7f5a3d"/><rect x="25" y="11" width="1.03" height="4.03" fill="#7f5a3d"/><rect x="25" y="15" width="1.03" height="4.03" fill="#745035"/><rect x="25" y="19" width="1.03" height="4.03" fill="#69472d"/><rect x="25" y="23" width="1.03" height="4.03" fill="#745035"/><rect x="25" y="27" width="1.03" height="2.03" fill="#69472d"/><rect x="25" y="29" width="1.03" height="3.03" fill="#745035"/><rect x="26" y="0" width="1.03" height="1.03" fill="#8a6545"/><rect x="26" y="1" width="1.03" height="1.03" fill="#7f5a3d"/><rect x="26" y="2" width="1.03" height="3.03" fill="#7f5a3d"/><rect x="26" y="5" width="1.03" height="2.03" fill="#8a6545"/><rect x="26" y="7" width="1.03" height="1.03" fill="#8a6545"/><rect x="26" y="8" width="1.03" height="1.03" fill="#7f5a3d"/><rect x="26" y="9" width="1.03" height="2.03" fill="#8a6545"/><rect x="26" y="11" width="1.03" height="1.03" fill="#7f5a3d"/><rect x="26" y="12" width="1.03" height="2.03" fill="#7f5a3d"/><rect x="26" y="14" width="1.03" height="2.03" fill="#8a6545"/><rect x="26" y="16" width="1.03" height="3.03" fill="#8a6545"/><rect x="26" y="19" width="1.03" height="3.03" fill="#7f5a3d"/><rect x="26" y="22" width="1.03" height="1.03" fill="#936e4c"/><rect x="26" y="23" width="1.03" height="1.03" fill="#936e4c"/><rect x="26" y="24" width="1.03" height="2.03" fill="#8a6545"/><rect x="26" y="26" width="1.03" height="2.03" fill="#8a6545"/><rect x="26" y="28" width="1.03" height="3.03" fill="#936e4c"/><rect x="26" y="31" width="1.03" height="1.03" fill="#7f5a3d"/><rect x="27" y="0" width="1.03" height="3.03" fill="#745035"/><rect x="27" y="3" width="1.03" height="2.03" fill="#8a6545"/><rect x="27" y="5" width="1.03" height="2.03" fill="#8a6545"/><rect x="27" y="7" width="1.03" height="1.03" fill="#7f5a3d"/><rect x="27" y="8" width="1.03" height="2.03" fill="#745035"/><rect x="27" y="10" width="1.03" height="3.03" fill="#745035"/><rect x="27" y="13" width="1.03" height="1.03" fill="#8a6545"/><rect x="27" y="14" width="1.03" height="1.03" fill="#745035"/><rect x="27" y="15" width="1.03" height="2.03" fill="#7f5a3d"/><rect x="27" y="17" width="1.03" height="2.03" fill="#8a6545"/><rect x="27" y="19" width="1.03" height="3.03" fill="#745035"/><rect x="27" y="22" width="1.03" height="1.03" fill="#8a6545"/><rect x="27" y="23" width="1.03" height="2.03" fill="#7f5a3d"/><rect x="27" y="25" width="1.03" height="1.03" fill="#745035"/><rect x="27" y="26" width="1.03" height="1.03" fill="#8a6545"/><rect x="27" y="27" width="1.03" height="1.03" fill="#8a6545"/><rect x="27" y="28" width="1.03" height="1.03" fill="#8a6545"/><rect x="27" y="29" width="1.03" height="2.03" fill="#745035"/><rect x="27" y="31" width="1.03" height="1.03" fill="#745035"/><rect x="28" y="0" width="1.03" height="1.03" fill="#7f5a3d"/><rect x="28" y="1" width="1.03" height="1.03" fill="#936e4c"/><rect x="28" y="2" width="1.03" height="3.03" fill="#8a6545"/><rect x="28" y="5" width="1.03" height="2.03" fill="#745035"/><rect x="28" y="7" width="1.03" height="1.03" fill="#8a6545"/><rect x="28" y="8" width="1.03" height="2.03" fill="#7f5a3d"/><rect x="28" y="10" width="1.03" height="1.03" fill="#8a6545"/><rect x="28" y="11" width="1.03" height="1.03" fill="#8a6545"/><rect x="28" y="12" width="1.03" height="3.03" fill="#8a6545"/><rect x="28" y="15" width="1.03" height="1.03" fill="#8a6545"/><rect x="28" y="16" width="1.03" height="2.03" fill="#8a6545"/><rect x="28" y="18" width="1.03" height="1.03" fill="#745035"/><rect x="28" y="19" width="1.03" height="2.03" fill="#8a6545"/><rect x="28" y="21" width="1.03" height="1.03" fill="#8a6545"/><rect x="28" y="22" width="1.03" height="2.03" fill="#936e4c"/><rect x="28" y="24" width="1.03" height="1.03" fill="#7f5a3d"/><rect x="28" y="25" width="1.03" height="1.03" fill="#7f5a3d"/><rect x="28" y="26" width="1.03" height="2.03" fill="#8a6545"/><rect x="28" y="28" width="1.03" height="2.03" fill="#8a6545"/><rect x="28" y="30" width="1.03" height="1.03" fill="#7f5a3d"/><rect x="28" y="31" width="1.03" height="1.03" fill="#7f5a3d"/><rect x="29" y="0" width="1.03" height="5.03" fill="#69472d"/><rect x="29" y="5" width="1.03" height="2.03" fill="#69472d"/><rect x="29" y="7" width="1.03" height="3.03" fill="#7f5a3d"/><rect x="29" y="10" width="1.03" height="3.03" fill="#745035"/><rect x="29" y="13" width="1.03" height="5.03" fill="#69472d"/><rect x="29" y="18" width="1.03" height="5.03" fill="#745035"/><rect x="29" y="23" width="1.03" height="5.03" fill="#69472d"/><rect x="29" y="28" width="1.03" height="4.03" fill="#69472d"/><rect x="30" y="0" width="1.03" height="2.03" fill="#745035"/><rect x="30" y="2" width="1.03" height="3.03" fill="#7f5a3d"/><rect x="30" y="5" width="1.03" height="1.03" fill="#7f5a3d"/><rect x="30" y="6" width="1.03" height="1.03" fill="#745035"/><rect x="30" y="7" width="1.03" height="1.03" fill="#745035"/><rect x="30" y="8" width="1.03" height="1.03" fill="#745035"/><rect x="30" y="9" width="1.03" height="1.03" fill="#745035"/><rect x="30" y="10" width="1.03" height="3.03" fill="#745035"/><rect x="30" y="13" width="1.03" height="1.03" fill="#745035"/><rect x="30" y="14" width="1.03" height="1.03" fill="#745035"/><rect x="30" y="15" width="1.03" height="1.03" fill="#745035"/><rect x="30" y="16" width="1.03" height="1.03" fill="#745035"/><rect x="30" y="17" width="1.03" height="2.03" fill="#7f5a3d"/><rect x="30" y="19" width="1.03" height="1.03" fill="#7f5a3d"/><rect x="30" y="20" width="1.03" height="3.03" fill="#745035"/><rect x="30" y="23" width="1.03" height="1.03" fill="#7f5a3d"/><rect x="30" y="24" width="1.03" height="1.03" fill="#7f5a3d"/><rect x="30" y="25" width="1.03" height="2.03" fill="#745035"/><rect x="30" y="27" width="1.03" height="1.03" fill="#7f5a3d"/><rect x="30" y="28" width="1.03" height="1.03" fill="#7f5a3d"/><rect x="30" y="29" width="1.03" height="2.03" fill="#8a6545"/><rect x="30" y="31" width="1.03" height="1.03" fill="#745035"/><rect x="31" y="0" width="1.03" height="4.03" fill="#69472d"/><rect x="31" y="4" width="1.03" height="5.03" fill="#69472d"/><rect x="31" y="9" width="1.03" height="3.03" fill="#745035"/><rect x="31" y="12" width="1.03" height="3.03" fill="#745035"/><rect x="31" y="15" width="1.03" height="2.03" fill="#69472d"/><rect x="31" y="17" width="1.03" height="5.03" fill="#745035"/><rect x="31" y="22" width="1.03" height="5.03" fill="#69472d"/><rect x="31" y="27" width="1.03" height="5.03" fill="#745035"/></symbol></defs></svg>
<div class="th" style="top:30px"><svg width="106" height="106" shape-rendering="crispEdges"><use href="#wood" width="106" height="106"/></svg><div class="thl" style="left:6px;top:5.500px">NORTH</div></div>
<div class="th" style="top:146px"><svg width="106" height="106" shape-rendering="crispEdges"><use href="#wood" width="106" height="106"/></svg><div class="thl" style="left:6px;top:5.500px">EAST</div></div>
<div class="th" style="top:262px"><svg width="106" height="106" shape-rendering="crispEdges"><use href="#wood" width="106" height="106"/></svg><div class="thl" style="left:6px;top:5.500px">SOUTH</div></div>
<div class="th" style="top:378px"><svg width="106" height="106" shape-rendering="crispEdges"><use href="#wood" width="106" height="106"/></svg><div class="thl" style="left:6px;top:5.500px">WEST</div></div>
<div class="th" style="top:494px"><svg width="106" height="106" shape-rendering="crispEdges"><use href="#wood" width="106" height="106"/></svg><div class="thl" style="left:6px;top:5.500px">UP</div></div>
<div class="th" style="top:610px"><svg width="106" height="106" shape-rendering="crispEdges"><use href="#wood" width="106" height="106"/></svg><div class="thl" style="left:6px;top:5.500px">DOWN</div></div>
<div class="sel" style="left:4px;top:29px;width:9px;height:62px"></div>
<div class="sel" style="left:4px;top:145px;width:9px;height:62px"></div>
<div class="sel" style="left:4px;top:261px;width:9px;height:62px"></div>
<div class="sel" style="left:4px;top:377px;width:9px;height:62px"></div>
<div class="sel" style="left:4px;top:493px;width:9px;height:9px"></div>
<div class="sel" style="left:4px;top:609px;width:9px;height:9px"></div>
</div>
<div id="vp"><svg class="abs" style="left:0;top:0" width="800" height="725" viewBox="321 131 800 725"><defs><linearGradient id="sideg" gradientUnits="userSpaceOnUse" x1="0" y1="0" x2="0" y2="1000"><stop offset="0" stop-color="#49331f"/><stop offset=".5" stop-color="#4f3824"/><stop offset=".5" stop-color="#4a3420"/><stop offset="1" stop-color="#4a3420"/></linearGradient></defs><g shape-rendering="crispEdges"><path d="M522.5 167.500L1121 151M522.5 167.500L540.600 802M522.500 167.500L604.400 260M1121 213.500L1055 252M637 298L644 305H972.500M644 305V625M972.500 305V627M1012 289L972.500 305" stroke="#b3b3b6" stroke-width="1" fill="none"/><path d="M540.5 802.8L645.7 624.3M578.1 804.1L665.2 624.7M615.9 805.4L684.7 625.0M654.0 806.8L704.3 625.4M692.4 808.1L723.9 625.7M731.0 809.5L743.6 626.1M769.9 810.8L763.4 626.5M809.1 812.2L783.3 626.8M848.5 813.6L803.2 627.2M888.2 814.9L823.2 627.6M928.2 816.3L843.3 627.9M968.5 817.7L863.4 628.3M1009.1 819.2L883.6 628.7M1049.9 820.6L903.9 629.1M1091.1 822.0L924.2 629.4M1132.5 823.5L944.7 629.8M1174.2 824.9L965.2 630.2M540.5 802.8L1174.2 824.9M552.6 782.3L1149.6 802.0M563.4 763.9L1127.7 781.6M573.1 747.4L1108.2 763.4M581.9 732.5L1090.5 747.0M589.9 719.0L1074.6 732.1M597.2 706.6L1060.1 718.6M603.9 695.3L1046.9 706.3M610.0 684.8L1034.8 695.0M615.7 675.2L1023.6 684.7M621.0 666.3L1013.4 675.1M625.8 658.1L1003.8 666.2M630.4 650.4L995.0 658.0M634.6 643.2L986.8 650.3M638.5 636.5L979.1 643.2M642.3 630.2L971.9 636.5M645.7 624.3L965.2 630.2" stroke="#8b8b9c" stroke-width="1" fill="none"/><path d="M848.5 813.6L803.2 627.2" stroke="#6e6e78" stroke-width="2.200"/><polygon points="540.5,802.8 1174.2,824.9 965.2,630.2 645.7,624.3" fill="none" stroke="#62626c" stroke-width="1.400"/><path d="M604.4 260L1055 252L1053.7 281.2L1047.7 285.9L610.1 292.6L604.8 288z" fill="#452f1c"/><path d="M604.4 260L631.5 259.5L636.1 264.8L640.8 679.7L636.4 685L610.8 684.5z" fill="#49331f"/><path d="M1024.5 281.7L1015.1 290.1L999.9 658.2L1008.6 667.1z" fill="#7a5a3e"/><path d="M1024.5 281.7L1024 294.5L1014.6 302.4L1015.1 290.1z" fill="#6c4d34"/><path d="M1024 294.5L1023.5 307.4L1014.1 314.7L1014.6 302.4z" fill="#84634a"/><path d="M1023.5 307.4L1022.9 320.2L1013.6 327L1014.1 314.7z" fill="#8d6b4c"/><path d="M1022.9 320.2L1022.4 333.1L1013.1 339.2L1013.6 327z" fill="#7a5a3e"/><path d="M1022.4 333.1L1021.9 345.9L1012.6 351.5L1013.1 339.2z" fill="#7a5a3e"/><path d="M1021.9 345.9L1021.3 358.8L1012.1 363.8L1012.6 351.5z" fill="#75553a"/><path d="M1021.3 358.8L1020.8 371.6L1011.5 376L1012.1 363.8z" fill="#7a5a3e"/><path d="M1020.8 371.6L1020.3 384.4L1011 388.3L1011.5 376z" fill="#6c4d34"/><path d="M1020.3 384.4L1019.7 397.3L1010.5 400.6L1011 388.3z" fill="#75553a"/><path d="M1019.7 397.3L1019.2 410.1L1010 412.8L1010.5 400.6z" fill="#7a5a3e"/><path d="M1019.2 410.1L1018.7 423L1009.5 425.1L1010 412.8z" fill="#75553a"/><path d="M1018.7 423L1018.2 435.8L1009 437.4L1009.5 425.1z" fill="#84634a"/><path d="M1018.2 435.8L1017.6 448.7L1008.5 449.6L1009 437.4z" fill="#7a5a3e"/><path d="M1017.6 448.7L1017.1 461.5L1008 461.9L1008.5 449.6z" fill="#7a5a3e"/><path d="M1017.1 461.5L1016.6 474.4L1007.5 474.2L1008 461.9z" fill="#8d6b4c"/><path d="M1016.6 474.4L1016 487.2L1007 486.5L1007.5 474.2z" fill="#8d6b4c"/><path d="M1016 487.2L1015.5 500.1L1006.5 498.7L1007 486.5z" fill="#7a5a3e"/><path d="M1015.5 500.1L1015 512.9L1006 511L1006.5 498.7z" fill="#84634a"/><path d="M1015 512.9L1014.4 525.8L1005.5 523.3L1006 511z" fill="#7a5a3e"/><path d="M1014.4 525.8L1013.9 538.6L1004.9 535.5L1005.5 523.3z" fill="#75553a"/><path d="M1013.9 538.6L1013.4 551.5L1004.4 547.8L1004.9 535.5z" fill="#8d6b4c"/><path d="M1013.4 551.5L1012.8 564.3L1003.9 560.1L1004.4 547.8z" fill="#7a5a3e"/><path d="M1012.8 564.3L1012.3 577.2L1003.4 572.3L1003.9 560.1z" fill="#75553a"/><path d="M1012.3 577.2L1011.8 590L1002.9 584.6L1003.4 572.3z" fill="#7a5a3e"/><path d="M1011.8 590L1011.2 602.9L1002.4 596.9L1002.9 584.6z" fill="#84634a"/><path d="M1011.2 602.9L1010.7 615.7L1001.9 609.1L1002.4 596.9z" fill="#75553a"/><path d="M1010.7 615.7L1010.2 628.6L1001.4 621.4L1001.9 609.1z" fill="#7a5a3e"/><path d="M1010.2 628.6L1009.6 641.4L1000.9 633.7L1001.4 621.4z" fill="#75553a"/><path d="M1009.6 641.4L1009.1 654.2L1000.4 646L1000.9 633.7z" fill="#75553a"/><path d="M1009.1 654.2L1008.6 667.1L999.9 658.2L1000.4 646z" fill="#8d6b4c"/><path d="M636.1 659.9L640.6 655.1L1003.7 662.2L1008.6 667.1z" fill="#9a7855"/><path d="M618.6 453.4L770.6 268.4L791.4 285.6L792.2 291.5L645 470.6L639.4 470.6z" fill="url(#sideg)"/><path d="M617.7 587.3L887.7 268.3L908.3 285.7L905.3 291.6L644 600.4L638.3 604.7z" fill="url(#sideg)"/><path d="M665.8 641.1L670.6 635.6L986.2 274.6L991.8 268.1L1012.2 285.9L686.2 658.9z" fill="url(#sideg)"/><path d="M639.4 470.6L647.9 460.3L637.4 451.7L629 462z" fill="#6b4a31"/><path d="M629 462L637.4 451.7L627 443.2L618.6 453.4z" fill="#80603f"/><path d="M647.9 460.3L656.3 450L645.9 441.4L637.4 451.7z" fill="#5d3d27"/><path d="M637.4 451.7L645.9 441.4L635.5 432.9L627 443.2z" fill="#80603f"/><path d="M656.3 450L664.8 439.7L654.3 431.2L645.9 441.4z" fill="#93714f"/><path d="M645.9 441.4L654.3 431.2L643.9 422.6L635.5 432.9z" fill="#8a6a4c"/><path d="M664.8 439.7L673.2 429.5L662.8 420.9L654.3 431.2z" fill="#8f6c4a"/><path d="M654.3 431.2L662.8 420.9L652.3 412.3L643.9 422.6z" fill="#856446"/><path d="M673.2 429.5L681.7 419.2L671.2 410.6L662.8 420.9z" fill="#856446"/><path d="M662.8 420.9L671.2 410.6L660.8 402L652.3 412.3z" fill="#856446"/><path d="M681.7 419.2L690.1 408.9L679.7 400.3L671.2 410.6z" fill="#9c7b58"/><path d="M671.2 410.6L679.7 400.3L669.2 391.8L660.8 402z" fill="#856446"/><path d="M690.1 408.9L698.5 398.6L688.1 390.1L679.7 400.3z" fill="#80603f"/><path d="M679.7 400.3L688.1 390.1L677.7 381.5L669.2 391.8z" fill="#93714f"/><path d="M698.5 398.6L707 388.3L696.6 379.8L688.1 390.1z" fill="#856446"/><path d="M688.1 390.1L696.6 379.8L686.1 371.2L677.7 381.5z" fill="#8a6a4c"/><path d="M707 388.3L715.4 378.1L705 369.5L696.6 379.8z" fill="#80603f"/><path d="M696.6 379.8L705 369.5L694.6 360.9L686.1 371.2z" fill="#856446"/><path d="M715.4 378.1L723.9 367.8L713.4 359.2L705 369.5z" fill="#856446"/><path d="M705 369.5L713.4 359.2L703 350.7L694.6 360.9z" fill="#80603f"/><path d="M723.9 367.8L732.3 357.5L721.9 348.9L713.4 359.2z" fill="#856446"/><path d="M713.4 359.2L721.9 348.9L711.5 340.4L703 350.7z" fill="#977553"/><path d="M732.3 357.5L740.8 347.2L730.3 338.7L721.9 348.9z" fill="#8f6c4a"/><path d="M721.9 348.9L730.3 338.7L719.9 330.1L711.5 340.4z" fill="#93714f"/><path d="M740.8 347.2L749.2 337L738.8 328.4L730.3 338.7z" fill="#8a6a4c"/><path d="M730.3 338.7L738.8 328.4L728.3 319.8L719.9 330.1z" fill="#977553"/><path d="M749.2 337L757.7 326.7L747.2 318.1L738.8 328.4z" fill="#93714f"/><path d="M738.8 328.4L747.2 318.1L736.8 309.5L728.3 319.8z" fill="#93714f"/><path d="M757.7 326.7L766.1 316.4L755.7 307.8L747.2 318.1z" fill="#856446"/><path d="M747.2 318.1L755.7 307.8L745.2 299.3L736.8 309.5z" fill="#6b4a31"/><path d="M766.1 316.4L774.5 306.1L764.1 297.6L755.7 307.8z" fill="#93714f"/><path d="M755.7 307.8L764.1 297.6L753.7 289L745.2 299.3z" fill="#74543a"/><path d="M774.5 306.1L783 295.8L772.6 287.3L764.1 297.6z" fill="#80603f"/><path d="M764.1 297.6L772.6 287.3L762.1 278.7L753.7 289z" fill="#7d5d42"/><path d="M783 295.8L791.4 285.6L781 277L772.6 287.3z" fill="#9c7b58"/><path d="M772.6 287.3L781 277L770.6 268.4L762.1 278.7z" fill="#5d3d27"/><path d="M638.3 604.7L647 594.4L636.7 585.7L628 596z" fill="#80603f"/><path d="M628 596L636.7 585.7L626.4 577L617.7 587.3z" fill="#93714f"/><path d="M647 594.4L655.7 584.1L645.4 575.4L636.7 585.7z" fill="#80603f"/><path d="M636.7 585.7L645.4 575.4L635.1 566.7L626.4 577z" fill="#977553"/><path d="M655.7 584.1L664.4 573.9L654.1 565.1L645.4 575.4z" fill="#80603f"/><path d="M645.4 575.4L654.1 565.1L643.8 556.4L635.1 566.7z" fill="#977553"/><path d="M664.4 573.9L673.1 563.6L662.8 554.8L654.1 565.1z" fill="#8a6a4c"/><path d="M654.1 565.1L662.8 554.8L652.5 546.1L643.8 556.4z" fill="#93714f"/><path d="M673.1 563.6L681.9 553.3L671.5 544.5L662.8 554.8z" fill="#8f6c4a"/><path d="M662.8 554.8L671.5 544.5L661.2 535.8L652.5 546.1z" fill="#80603f"/><path d="M681.9 553.3L690.6 543L680.3 534.3L671.5 544.5z" fill="#a38160"/><path d="M671.5 544.5L680.3 534.3L670 525.5L661.2 535.8z" fill="#9c7b58"/><path d="M690.6 543L699.3 532.7L689 524L680.3 534.3z" fill="#93714f"/><path d="M680.3 534.3L689 524L678.7 515.2L670 525.5z" fill="#977553"/><path d="M699.3 532.7L708 522.4L697.7 513.7L689 524z" fill="#977553"/><path d="M689 524L697.7 513.7L687.4 505L678.7 515.2z" fill="#977553"/><path d="M708 522.4L716.7 512.1L706.4 503.4L697.7 513.7z" fill="#80603f"/><path d="M697.7 513.7L706.4 503.4L696.1 494.7L687.4 505z" fill="#a38160"/><path d="M716.7 512.1L725.4 501.8L715.1 493.1L706.4 503.4z" fill="#8f6c4a"/><path d="M706.4 503.4L715.1 493.1L704.8 484.4L696.1 494.7z" fill="#9c7b58"/><path d="M725.4 501.8L734.1 491.5L723.8 482.8L715.1 493.1z" fill="#8f6c4a"/><path d="M715.1 493.1L723.8 482.8L713.5 474.1L704.8 484.4z" fill="#a38160"/><path d="M734.1 491.5L742.8 481.2L732.5 472.5L723.8 482.8z" fill="#8a6a4c"/><path d="M723.8 482.8L732.5 472.5L722.2 463.8L713.5 474.1z" fill="#8a6a4c"/><path d="M742.8 481.2L751.5 470.9L741.2 462.2L732.5 472.5z" fill="#8a6a4c"/><path d="M732.5 472.5L741.2 462.2L730.9 453.5L722.2 463.8z" fill="#93714f"/><path d="M751.5 470.9L760.2 460.7L749.9 451.9L741.2 462.2z" fill="#80603f"/><path d="M741.2 462.2L749.9 451.9L739.6 443.2L730.9 453.5z" fill="#856446"/><path d="M760.2 460.7L768.9 450.4L758.6 441.6L749.9 451.9z" fill="#9c7b58"/><path d="M749.9 451.9L758.6 441.6L748.3 432.9L739.6 443.2z" fill="#856446"/><path d="M768.9 450.4L777.7 440.1L767.4 431.4L758.6 441.6z" fill="#a38160"/><path d="M758.6 441.6L767.4 431.4L757.1 422.6L748.3 432.9z" fill="#93714f"/><path d="M777.7 440.1L786.4 429.8L776.1 421.1L767.4 431.4z" fill="#93714f"/><path d="M767.4 431.4L776.1 421.1L765.8 412.3L757.1 422.6z" fill="#856446"/><path d="M786.4 429.8L795.1 419.5L784.8 410.8L776.1 421.1z" fill="#977553"/><path d="M776.1 421.1L784.8 410.8L774.5 402.1L765.8 412.3z" fill="#8f6c4a"/><path d="M795.1 419.5L803.8 409.2L793.5 400.5L784.8 410.8z" fill="#977553"/><path d="M784.8 410.8L793.5 400.5L783.2 391.8L774.5 402.1z" fill="#93714f"/><path d="M803.8 409.2L812.5 398.9L802.2 390.2L793.5 400.5z" fill="#93714f"/><path d="M793.5 400.5L802.2 390.2L791.9 381.5L783.2 391.8z" fill="#93714f"/><path d="M812.5 398.9L821.2 388.6L810.9 379.9L802.2 390.2z" fill="#8a6a4c"/><path d="M802.2 390.2L810.9 379.9L800.6 371.2L791.9 381.5z" fill="#93714f"/><path d="M821.2 388.6L829.9 378.3L819.6 369.6L810.9 379.9z" fill="#93714f"/><path d="M810.9 379.9L819.6 369.6L809.3 360.9L800.6 371.2z" fill="#8f6c4a"/><path d="M829.9 378.3L838.6 368L828.3 359.3L819.6 369.6z" fill="#80603f"/><path d="M819.6 369.6L828.3 359.3L818 350.6L809.3 360.9z" fill="#8f6c4a"/><path d="M838.6 368L847.3 357.8L837 349L828.3 359.3z" fill="#80603f"/><path d="M828.3 359.3L837 349L826.7 340.3L818 350.6z" fill="#80603f"/><path d="M847.3 357.8L856 347.5L845.7 338.7L837 349z" fill="#80603f"/><path d="M837 349L845.7 338.7L835.4 330L826.7 340.3z" fill="#8f6c4a"/><path d="M856 347.5L864.8 337.2L854.5 328.5L845.7 338.7z" fill="#8a6a4c"/><path d="M845.7 338.7L854.5 328.5L844.1 319.7L835.4 330z" fill="#8a6a4c"/><path d="M864.8 337.2L873.5 326.9L863.2 318.2L854.5 328.5z" fill="#8f6c4a"/><path d="M854.5 328.5L863.2 318.2L852.9 309.4L844.1 319.7z" fill="#8a6a4c"/><path d="M873.5 326.9L882.2 316.6L871.9 307.9L863.2 318.2z" fill="#80603f"/><path d="M863.2 318.2L871.9 307.9L861.6 299.1L852.9 309.4z" fill="#977553"/><path d="M882.2 316.6L890.9 306.3L880.6 297.6L871.9 307.9z" fill="#8a6a4c"/><path d="M871.9 307.9L880.6 297.6L870.3 288.9L861.6 299.1z" fill="#93714f"/><path d="M890.9 306.3L899.6 296L889.3 287.3L880.6 297.6z" fill="#8a6a4c"/><path d="M880.6 297.6L889.3 287.3L879 278.6L870.3 288.9z" fill="#977553"/><path d="M899.6 296L908.3 285.7L898 277L889.3 287.3z" fill="#977553"/><path d="M889.3 287.3L898 277L887.7 268.3L879 278.6z" fill="#977553"/><path d="M686.2 658.9L695 648.8L684.8 639.9L676 650z" fill="#a38160"/><path d="M676 650L684.8 639.9L674.6 631L665.8 641.1z" fill="#8a6a4c"/><path d="M695 648.8L703.8 638.7L693.6 629.8L684.8 639.9z" fill="#7d5d42"/><path d="M684.8 639.9L693.6 629.8L683.5 621L674.6 631z" fill="#93714f"/><path d="M703.8 638.7L712.6 628.6L702.4 619.8L693.6 629.8z" fill="#5d3d27"/><path d="M693.6 629.8L702.4 619.8L692.3 610.9L683.5 621z" fill="#93714f"/><path d="M712.6 628.6L721.4 618.6L711.2 609.7L702.4 619.8z" fill="#6b4a31"/><path d="M702.4 619.8L711.2 609.7L701.1 600.8L692.3 610.9z" fill="#8a6a4c"/><path d="M721.4 618.6L730.2 608.5L720.1 599.6L711.2 609.7z" fill="#7d5d42"/><path d="M711.2 609.7L720.1 599.6L709.9 590.7L701.1 600.8z" fill="#93714f"/><path d="M730.2 608.5L739 598.4L728.9 589.5L720.1 599.6z" fill="#5d3d27"/><path d="M720.1 599.6L728.9 589.5L718.7 580.6L709.9 590.7z" fill="#8a6a4c"/><path d="M739 598.4L747.8 588.3L737.7 579.4L728.9 589.5z" fill="#74543a"/><path d="M728.9 589.5L737.7 579.4L727.5 570.5L718.7 580.6z" fill="#9c7b58"/><path d="M747.8 588.3L756.7 578.2L746.5 569.4L737.7 579.4z" fill="#5d3d27"/><path d="M737.7 579.4L746.5 569.4L736.3 560.5L727.5 570.5z" fill="#93714f"/><path d="M756.7 578.2L765.5 568.2L755.3 559.3L746.5 569.4z" fill="#74543a"/><path d="M746.5 569.4L755.3 559.3L745.1 550.4L736.3 560.5z" fill="#7d5d42"/><path d="M765.5 568.2L774.3 558.1L764.1 549.2L755.3 559.3z" fill="#6b4a31"/><path d="M755.3 559.3L764.1 549.2L753.9 540.3L745.1 550.4z" fill="#5d3d27"/><path d="M774.3 558.1L783.1 548L772.9 539.1L764.1 549.2z" fill="#7d5d42"/><path d="M764.1 549.2L772.9 539.1L762.8 530.2L753.9 540.3z" fill="#6b4a31"/><path d="M783.1 548L791.9 537.9L781.7 529L772.9 539.1z" fill="#5d3d27"/><path d="M772.9 539.1L781.7 529L771.6 520.1L762.8 530.2z" fill="#74543a"/><path d="M791.9 537.9L800.7 527.8L790.5 518.9L781.7 529z" fill="#74543a"/><path d="M781.7 529L790.5 518.9L780.4 510.1L771.6 520.1z" fill="#6b4a31"/><path d="M800.7 527.8L809.5 517.7L799.4 508.9L790.5 518.9z" fill="#74543a"/><path d="M790.5 518.9L799.4 508.9L789.2 500L780.4 510.1z" fill="#5d3d27"/><path d="M809.5 517.7L818.3 507.7L808.2 498.8L799.4 508.9z" fill="#74543a"/><path d="M799.4 508.9L808.2 498.8L798 489.9L789.2 500z" fill="#8f6c4a"/><path d="M818.3 507.7L827.1 497.6L817 488.7L808.2 498.8z" fill="#74543a"/><path d="M808.2 498.8L817 488.7L806.8 479.8L798 489.9z" fill="#93714f"/><path d="M827.1 497.6L835.9 487.5L825.8 478.6L817 488.7z" fill="#5d3d27"/><path d="M817 488.7L825.8 478.6L815.6 469.7L806.8 479.8z" fill="#856446"/><path d="M835.9 487.5L844.8 477.4L834.6 468.5L825.8 478.6z" fill="#6b4a31"/><path d="M825.8 478.6L834.6 468.5L824.4 459.7L815.6 469.7z" fill="#8f6c4a"/><path d="M844.8 477.4L853.6 467.3L843.4 458.5L834.6 468.5z" fill="#74543a"/><path d="M834.6 468.5L843.4 458.5L833.2 449.6L824.4 459.7z" fill="#80603f"/><path d="M853.6 467.3L862.4 457.3L852.2 448.4L843.4 458.5z" fill="#9c7b58"/><path d="M843.4 458.5L852.2 448.4L842.1 439.5L833.2 449.6z" fill="#8f6c4a"/><path d="M862.4 457.3L871.2 447.2L861 438.3L852.2 448.4z" fill="#a38160"/><path d="M852.2 448.4L861 438.3L850.9 429.4L842.1 439.5z" fill="#8a6a4c"/><path d="M871.2 447.2L880 437.1L869.8 428.2L861 438.3z" fill="#93714f"/><path d="M861 438.3L869.8 428.2L859.7 419.3L850.9 429.4z" fill="#8f6c4a"/><path d="M880 437.1L888.8 427L878.6 418.1L869.8 428.2z" fill="#7d5d42"/><path d="M869.8 428.2L878.6 418.1L868.5 409.3L859.7 419.3z" fill="#80603f"/><path d="M888.8 427L897.6 416.9L887.5 408.1L878.6 418.1z" fill="#6b4a31"/><path d="M878.6 418.1L887.5 408.1L877.3 399.2L868.5 409.3z" fill="#8a6a4c"/><path d="M897.6 416.9L906.4 406.9L896.3 398L887.5 408.1z" fill="#74543a"/><path d="M887.5 408.1L896.3 398L886.1 389.1L877.3 399.2z" fill="#856446"/><path d="M906.4 406.9L915.2 396.8L905.1 387.9L896.3 398z" fill="#6b4a31"/><path d="M896.3 398L905.1 387.9L894.9 379L886.1 389.1z" fill="#8f6c4a"/><path d="M915.2 396.8L924.1 386.7L913.9 377.8L905.1 387.9z" fill="#74543a"/><path d="M905.1 387.9L913.9 377.8L903.7 368.9L894.9 379z" fill="#856446"/><path d="M924.1 386.7L932.9 376.6L922.7 367.7L913.9 377.8z" fill="#93714f"/><path d="M913.9 377.8L922.7 367.7L912.5 358.8L903.7 368.9z" fill="#8f6c4a"/><path d="M932.9 376.6L941.7 366.5L931.5 357.6L922.7 367.7z" fill="#a38160"/><path d="M922.7 367.7L931.5 357.6L921.3 348.8L912.5 358.8z" fill="#80603f"/><path d="M941.7 366.5L950.5 356.5L940.3 347.6L931.5 357.6z" fill="#9c7b58"/><path d="M931.5 357.6L940.3 347.6L930.2 338.7L921.3 348.8z" fill="#93714f"/><path d="M950.5 356.5L959.3 346.4L949.1 337.5L940.3 347.6z" fill="#977553"/><path d="M940.3 347.6L949.1 337.5L939 328.6L930.2 338.7z" fill="#a38160"/><path d="M959.3 346.4L968.1 336.3L957.9 327.4L949.1 337.5z" fill="#93714f"/><path d="M949.1 337.5L957.9 327.4L947.8 318.5L939 328.6z" fill="#a38160"/><path d="M968.1 336.3L976.9 326.2L966.8 317.3L957.9 327.4z" fill="#5d3d27"/><path d="M957.9 327.4L966.8 317.3L956.6 308.4L947.8 318.5z" fill="#93714f"/><path d="M976.9 326.2L985.7 316.1L975.6 307.2L966.8 317.3z" fill="#74543a"/><path d="M966.8 317.3L975.6 307.2L965.4 298.4L956.6 308.4z" fill="#93714f"/><path d="M985.7 316.1L994.5 306L984.4 297.2L975.6 307.2z" fill="#74543a"/><path d="M975.6 307.2L984.4 297.2L974.2 288.3L965.4 298.4z" fill="#977553"/><path d="M994.5 306L1003.4 296L993.2 287.1L984.4 297.2z" fill="#7d5d42"/><path d="M984.4 297.2L993.2 287.1L983 278.2L974.2 288.3z" fill="#856446"/><path d="M1003.4 296L1012.2 285.9L1002 277L993.2 287.1z" fill="#9c7b58"/><path d="M993.2 287.1L1002 277L991.8 268.1L983 278.2z" fill="#8a6a4c"/><path d="M686.2 658.9L731.8 606.7L711.5 588.9L665.8 641.1z" fill="#ff00ff"/><path d="M617.2 617.3L636.8 598.7L642.5 594.6L690 645L685.8 650.7L666.2 669.3z" fill="url(#sideg)"/><path d="M609.7 460.7L630.3 443.3L636.2 444.1L812.4 652.2L812.3 658.3L791.7 675.7z" fill="url(#sideg)"/><path d="M613.3 332.7L633.9 315.3L639.7 320.3L919.9 654.2L923.3 660.3L902.7 677.7z" fill="url(#sideg)"/><path d="M684.6 285.6L705.4 268.4L1034.4 666.4L1013.6 683.6L1007.2 676.8L688.8 291.5z" fill="url(#sideg)"/><path d="M617.2 617.3L627 627.7L636.8 618.4L627 608z" fill="#977553"/><path d="M627 608L636.8 618.4L646.6 609.1L636.8 598.7z" fill="#977553"/><path d="M627 627.7L636.8 638.1L646.6 628.8L636.8 618.4z" fill="#977553"/><path d="M636.8 618.4L646.6 628.8L656.4 619.5L646.6 609.1z" fill="#93714f"/><path d="M636.8 638.1L646.6 648.5L656.4 639.2L646.6 628.8z" fill="#9c7b58"/><path d="M646.6 628.8L656.4 639.2L666.2 629.9L656.4 619.5z" fill="#80603f"/><path d="M646.6 648.5L656.4 658.9L666.2 649.6L656.4 639.2z" fill="#a38160"/><path d="M656.4 639.2L666.2 649.6L676 640.3L666.2 629.9z" fill="#856446"/><path d="M656.4 658.9L666.2 669.3L676 660L666.2 649.6z" fill="#a38160"/><path d="M666.2 649.6L676 660L685.8 650.7L676 640.3z" fill="#74543a"/><path d="M609.7 460.7L618.4 471L628.7 462.2L620 452z" fill="#9c7b58"/><path d="M620 452L628.7 462.2L639 453.5L630.3 443.3z" fill="#856446"/><path d="M618.4 471L627 481.2L637.3 472.5L628.7 462.2z" fill="#8f6c4a"/><path d="M628.7 462.2L637.3 472.5L647.6 463.8L639 453.5z" fill="#8f6c4a"/><path d="M627 481.2L635.7 491.4L646 482.7L637.3 472.5z" fill="#8a6a4c"/><path d="M637.3 472.5L646 482.7L656.3 474L647.6 463.8z" fill="#8f6c4a"/><path d="M635.7 491.4L644.4 501.7L654.7 493L646 482.7z" fill="#856446"/><path d="M646 482.7L654.7 493L665 484.2L656.3 474z" fill="#74543a"/><path d="M644.4 501.7L653 511.9L663.3 503.2L654.7 493z" fill="#8a6a4c"/><path d="M654.7 493L663.3 503.2L673.6 494.5L665 484.2z" fill="#5d3d27"/><path d="M653 511.9L661.7 522.2L672 513.4L663.3 503.2z" fill="#80603f"/><path d="M663.3 503.2L672 513.4L682.3 504.7L673.6 494.5z" fill="#74543a"/><path d="M661.7 522.2L670.4 532.4L680.7 523.7L672 513.4z" fill="#856446"/><path d="M672 513.4L680.7 523.7L691 514.9L682.3 504.7z" fill="#7d5d42"/><path d="M670.4 532.4L679 542.6L689.3 533.9L680.7 523.7z" fill="#8f6c4a"/><path d="M680.7 523.7L689.3 533.9L699.6 525.2L691 514.9z" fill="#5d3d27"/><path d="M679 542.6L687.7 552.9L698 544.1L689.3 533.9z" fill="#8a6a4c"/><path d="M689.3 533.9L698 544.1L708.3 535.4L699.6 525.2z" fill="#80603f"/><path d="M687.7 552.9L696.4 563.1L706.7 554.4L698 544.1z" fill="#8f6c4a"/><path d="M698 544.1L706.7 554.4L717 545.7L708.3 535.4z" fill="#93714f"/><path d="M696.4 563.1L705 573.3L715.3 564.6L706.7 554.4z" fill="#977553"/><path d="M706.7 554.4L715.3 564.6L725.6 555.9L717 545.7z" fill="#93714f"/><path d="M705 573.3L713.7 583.6L724 574.9L715.3 564.6z" fill="#977553"/><path d="M715.3 564.6L724 574.9L734.3 566.1L725.6 555.9z" fill="#8f6c4a"/><path d="M713.7 583.6L722.4 593.8L732.7 585.1L724 574.9z" fill="#977553"/><path d="M724 574.9L732.7 585.1L743 576.4L734.3 566.1z" fill="#856446"/><path d="M722.4 593.8L731 604.1L741.3 595.3L732.7 585.1z" fill="#93714f"/><path d="M732.7 585.1L741.3 595.3L751.6 586.6L743 576.4z" fill="#8a6a4c"/><path d="M731 604.1L739.7 614.3L750 605.6L741.3 595.3z" fill="#a38160"/><path d="M741.3 595.3L750 605.6L760.3 596.8L751.6 586.6z" fill="#9c7b58"/><path d="M739.7 614.3L748.4 624.5L758.7 615.8L750 605.6z" fill="#977553"/><path d="M750 605.6L758.7 615.8L769 607.1L760.3 596.8z" fill="#977553"/><path d="M748.4 624.5L757 634.8L767.3 626L758.7 615.8z" fill="#9c7b58"/><path d="M758.7 615.8L767.3 626L777.6 617.3L769 607.1z" fill="#977553"/><path d="M757 634.8L765.7 645L776 636.3L767.3 626z" fill="#8f6c4a"/><path d="M767.3 626L776 636.3L786.3 627.6L777.6 617.3z" fill="#977553"/><path d="M765.7 645L774.4 655.2L784.7 646.5L776 636.3z" fill="#7d5d42"/><path d="M776 636.3L784.7 646.5L795 637.8L786.3 627.6z" fill="#a38160"/><path d="M774.4 655.2L783 665.5L793.3 656.8L784.7 646.5z" fill="#5d3d27"/><path d="M784.7 646.5L793.3 656.8L803.6 648L795 637.8z" fill="#977553"/><path d="M783 665.5L791.7 675.7L802 667L793.3 656.8z" fill="#5d3d27"/><path d="M793.3 656.8L802 667L812.3 658.3L803.6 648z" fill="#93714f"/><path d="M613.3 332.7L621.8 342.8L632.1 334.1L623.6 324z" fill="#9c7b58"/><path d="M623.6 324L632.1 334.1L642.5 325.5L633.9 315.3z" fill="#6b4a31"/><path d="M621.8 342.8L630.3 353L640.6 344.3L632.1 334.1z" fill="#9c7b58"/><path d="M632.1 334.1L640.6 344.3L651 335.6L642.5 325.5z" fill="#7d5d42"/><path d="M630.3 353L638.8 363.1L649.1 354.4L640.6 344.3z" fill="#a38160"/><path d="M640.6 344.3L649.1 354.4L659.5 345.8L651 335.6z" fill="#74543a"/><path d="M638.8 363.1L647.3 373.3L657.6 364.6L649.1 354.4z" fill="#93714f"/><path d="M649.1 354.4L657.6 364.6L668 355.9L659.5 345.8z" fill="#856446"/><path d="M647.3 373.3L655.8 383.4L666.2 374.7L657.6 364.6z" fill="#977553"/><path d="M657.6 364.6L666.2 374.7L676.5 366.1L668 355.9z" fill="#9c7b58"/><path d="M655.8 383.4L664.3 393.6L674.7 384.9L666.2 374.7z" fill="#a38160"/><path d="M666.2 374.7L674.7 384.9L685 376.2L676.5 366.1z" fill="#93714f"/><path d="M664.3 393.6L672.8 403.7L683.2 395L674.7 384.9z" fill="#9c7b58"/><path d="M674.7 384.9L683.2 395L693.5 386.4L685 376.2z" fill="#977553"/><path d="M672.8 403.7L681.4 413.9L691.7 405.2L683.2 395z" fill="#a38160"/><path d="M683.2 395L691.7 405.2L702 396.5L693.5 386.4z" fill="#93714f"/><path d="M681.4 413.9L689.9 424L700.2 415.3L691.7 405.2z" fill="#93714f"/><path d="M691.7 405.2L700.2 415.3L710.5 406.6L702 396.5z" fill="#977553"/><path d="M689.9 424L698.4 434.1L708.7 425.5L700.2 415.3z" fill="#977553"/><path d="M700.2 415.3L708.7 425.5L719.1 416.8L710.5 406.6z" fill="#977553"/><path d="M698.4 434.1L706.9 444.3L717.2 435.6L708.7 425.5z" fill="#a38160"/><path d="M708.7 425.5L717.2 435.6L727.6 426.9L719.1 416.8z" fill="#93714f"/><path d="M706.9 444.3L715.4 454.4L725.7 445.8L717.2 435.6z" fill="#977553"/><path d="M717.2 435.6L725.7 445.8L736.1 437.1L727.6 426.9z" fill="#a38160"/><path d="M715.4 454.4L723.9 464.6L734.3 455.9L725.7 445.8z" fill="#a38160"/><path d="M725.7 445.8L734.3 455.9L744.6 447.2L736.1 437.1z" fill="#977553"/><path d="M723.9 464.6L732.4 474.7L742.8 466.1L734.3 455.9z" fill="#9c7b58"/><path d="M734.3 455.9L742.8 466.1L753.1 457.4L744.6 447.2z" fill="#9c7b58"/><path d="M732.4 474.7L740.9 484.9L751.3 476.2L742.8 466.1z" fill="#93714f"/><path d="M742.8 466.1L751.3 476.2L761.6 467.5L753.1 457.4z" fill="#93714f"/><path d="M740.9 484.9L749.4 495L759.8 486.4L751.3 476.2z" fill="#a38160"/><path d="M751.3 476.2L759.8 486.4L770.1 477.7L761.6 467.5z" fill="#80603f"/><path d="M749.4 495L758 505.2L768.3 496.5L759.8 486.4z" fill="#9c7b58"/><path d="M759.8 486.4L768.3 496.5L778.6 487.8L770.1 477.7z" fill="#856446"/><path d="M758 505.2L766.5 515.3L776.8 506.6L768.3 496.5z" fill="#a38160"/><path d="M768.3 496.5L776.8 506.6L787.2 498L778.6 487.8z" fill="#74543a"/><path d="M766.5 515.3L775 525.5L785.3 516.8L776.8 506.6z" fill="#9c7b58"/><path d="M776.8 506.6L785.3 516.8L795.7 508.1L787.2 498z" fill="#7d5d42"/><path d="M775 525.5L783.5 535.6L793.8 526.9L785.3 516.8z" fill="#8a6a4c"/><path d="M785.3 516.8L793.8 526.9L804.2 518.3L795.7 508.1z" fill="#7d5d42"/><path d="M783.5 535.6L792 545.8L802.3 537.1L793.8 526.9z" fill="#93714f"/><path d="M793.8 526.9L802.3 537.1L812.7 528.4L804.2 518.3z" fill="#977553"/><path d="M792 545.8L800.5 555.9L810.9 547.2L802.3 537.1z" fill="#8a6a4c"/><path d="M802.3 537.1L810.9 547.2L821.2 538.6L812.7 528.4z" fill="#a38160"/><path d="M800.5 555.9L809 566.1L819.4 557.4L810.9 547.2z" fill="#8a6a4c"/><path d="M810.9 547.2L819.4 557.4L829.7 548.7L821.2 538.6z" fill="#977553"/><path d="M809 566.1L817.5 576.2L827.9 567.5L819.4 557.4z" fill="#977553"/><path d="M819.4 557.4L827.9 567.5L838.2 558.9L829.7 548.7z" fill="#9c7b58"/><path d="M817.5 576.2L826.1 586.4L836.4 577.7L827.9 567.5z" fill="#9c7b58"/><path d="M827.9 567.5L836.4 577.7L846.7 569L838.2 558.9z" fill="#977553"/><path d="M826.1 586.4L834.6 596.5L844.9 587.8L836.4 577.7z" fill="#93714f"/><path d="M836.4 577.7L844.9 587.8L855.2 579.1L846.7 569z" fill="#5d3d27"/><path d="M834.6 596.5L843.1 606.6L853.4 598L844.9 587.8z" fill="#9c7b58"/><path d="M844.9 587.8L853.4 598L863.8 589.3L855.2 579.1z" fill="#7d5d42"/><path d="M843.1 606.6L851.6 616.8L861.9 608.1L853.4 598z" fill="#9c7b58"/><path d="M853.4 598L861.9 608.1L872.3 599.4L863.8 589.3z" fill="#80603f"/><path d="M851.6 616.8L860.1 626.9L870.4 618.3L861.9 608.1z" fill="#9c7b58"/><path d="M861.9 608.1L870.4 618.3L880.8 609.6L872.3 599.4z" fill="#80603f"/><path d="M860.1 626.9L868.6 637.1L879 628.4L870.4 618.3z" fill="#93714f"/><path d="M870.4 618.3L879 628.4L889.3 619.7L880.8 609.6z" fill="#80603f"/><path d="M868.6 637.1L877.1 647.2L887.5 638.6L879 628.4z" fill="#977553"/><path d="M879 628.4L887.5 638.6L897.8 629.9L889.3 619.7z" fill="#856446"/><path d="M877.1 647.2L885.6 657.4L896 648.7L887.5 638.6z" fill="#a38160"/><path d="M887.5 638.6L896 648.7L906.3 640L897.8 629.9z" fill="#8a6a4c"/><path d="M885.6 657.4L894.1 667.5L904.5 658.9L896 648.7z" fill="#a38160"/><path d="M896 648.7L904.5 658.9L914.8 650.2L906.3 640z" fill="#80603f"/><path d="M894.1 667.5L902.7 677.7L913 669L904.5 658.9z" fill="#93714f"/><path d="M904.5 658.9L913 669L923.3 660.3L914.8 650.2z" fill="#8a6a4c"/><path d="M882.4 653.5L902.7 677.7L923.3 660.3L903.1 636.2z" fill="#ff00ff"/><path d="M684.6 285.6L693 295.8L703.4 287.2L695 277z" fill="#6b4a31"/><path d="M695 277L703.4 287.2L713.8 278.6L705.4 268.4z" fill="#9c7b58"/><path d="M693 295.8L701.5 306L711.9 297.4L703.4 287.2z" fill="#6b4a31"/><path d="M703.4 287.2L711.9 297.4L722.3 288.8L713.8 278.6z" fill="#93714f"/><path d="M701.5 306L709.9 316.2L720.3 307.6L711.9 297.4z" fill="#93714f"/><path d="M711.9 297.4L720.3 307.6L730.7 299L722.3 288.8z" fill="#977553"/><path d="M709.9 316.2L718.3 326.4L728.7 317.8L720.3 307.6z" fill="#8a6a4c"/><path d="M720.3 307.6L728.7 317.8L739.1 309.2L730.7 299z" fill="#a38160"/><path d="M718.3 326.4L726.8 336.6L737.2 328L728.7 317.8z" fill="#856446"/><path d="M728.7 317.8L737.2 328L747.6 319.4L739.1 309.2z" fill="#a38160"/><path d="M726.8 336.6L735.2 346.8L745.6 338.2L737.2 328z" fill="#8a6a4c"/><path d="M737.2 328L745.6 338.2L756 329.6L747.6 319.4z" fill="#9c7b58"/><path d="M735.2 346.8L743.6 357L754.1 348.4L745.6 338.2z" fill="#6b4a31"/><path d="M745.6 338.2L754.1 348.4L764.5 339.8L756 329.6z" fill="#93714f"/><path d="M743.6 357L752.1 367.2L762.5 358.6L754.1 348.4z" fill="#74543a"/><path d="M754.1 348.4L762.5 358.6L772.9 350L764.5 339.8z" fill="#93714f"/><path d="M752.1 367.2L760.5 377.4L770.9 368.8L762.5 358.6z" fill="#5d3d27"/><path d="M762.5 358.6L770.9 368.8L781.3 360.2L772.9 350z" fill="#7d5d42"/><path d="M760.5 377.4L769 387.7L779.4 379.1L770.9 368.8z" fill="#6b4a31"/><path d="M770.9 368.8L779.4 379.1L789.8 370.5L781.3 360.2z" fill="#74543a"/><path d="M769 387.7L777.4 397.9L787.8 389.3L779.4 379.1z" fill="#5d3d27"/><path d="M779.4 379.1L787.8 389.3L798.2 380.7L789.8 370.5z" fill="#7d5d42"/><path d="M777.4 397.9L785.8 408.1L796.2 399.5L787.8 389.3z" fill="#7d5d42"/><path d="M787.8 389.3L796.2 399.5L806.6 390.9L798.2 380.7z" fill="#5d3d27"/><path d="M785.8 408.1L794.3 418.3L804.7 409.7L796.2 399.5z" fill="#5d3d27"/><path d="M796.2 399.5L804.7 409.7L815.1 401.1L806.6 390.9z" fill="#5d3d27"/><path d="M794.3 418.3L802.7 428.5L813.1 419.9L804.7 409.7z" fill="#74543a"/><path d="M804.7 409.7L813.1 419.9L823.5 411.3L815.1 401.1z" fill="#5d3d27"/><path d="M802.7 428.5L811.1 438.7L821.5 430.1L813.1 419.9z" fill="#7d5d42"/><path d="M813.1 419.9L821.5 430.1L831.9 421.5L823.5 411.3z" fill="#7d5d42"/><path d="M811.1 438.7L819.6 448.9L830 440.3L821.5 430.1z" fill="#7d5d42"/><path d="M821.5 430.1L830 440.3L840.4 431.7L831.9 421.5z" fill="#7d5d42"/><path d="M819.6 448.9L828 459.1L838.4 450.5L830 440.3z" fill="#5d3d27"/><path d="M830 440.3L838.4 450.5L848.8 441.9L840.4 431.7z" fill="#5d3d27"/><path d="M828 459.1L836.4 469.3L846.8 460.7L838.4 450.5z" fill="#977553"/><path d="M838.4 450.5L846.8 460.7L857.3 452.1L848.8 441.9z" fill="#5d3d27"/><path d="M836.4 469.3L844.9 479.5L855.3 470.9L846.8 460.7z" fill="#93714f"/><path d="M846.8 460.7L855.3 470.9L865.7 462.3L857.3 452.1z" fill="#74543a"/><path d="M844.9 479.5L853.3 489.7L863.7 481.1L855.3 470.9z" fill="#9c7b58"/><path d="M855.3 470.9L863.7 481.1L874.1 472.5L865.7 462.3z" fill="#9c7b58"/><path d="M853.3 489.7L861.7 499.9L872.2 491.3L863.7 481.1z" fill="#856446"/><path d="M863.7 481.1L872.2 491.3L882.6 482.7L874.1 472.5z" fill="#93714f"/><path d="M861.7 499.9L870.2 510.1L880.6 501.5L872.2 491.3z" fill="#856446"/><path d="M872.2 491.3L880.6 501.5L891 492.9L882.6 482.7z" fill="#9c7b58"/><path d="M870.2 510.1L878.6 520.3L889 511.7L880.6 501.5z" fill="#856446"/><path d="M880.6 501.5L889 511.7L899.4 503.1L891 492.9z" fill="#9c7b58"/><path d="M878.6 520.3L887.1 530.5L897.5 521.9L889 511.7z" fill="#6b4a31"/><path d="M889 511.7L897.5 521.9L907.9 513.3L899.4 503.1z" fill="#9c7b58"/><path d="M887.1 530.5L895.5 540.7L905.9 532.1L897.5 521.9z" fill="#5d3d27"/><path d="M897.5 521.9L905.9 532.1L916.3 523.5L907.9 513.3z" fill="#8a6a4c"/><path d="M895.5 540.7L903.9 550.9L914.3 542.3L905.9 532.1z" fill="#80603f"/><path d="M905.9 532.1L914.3 542.3L924.7 533.7L916.3 523.5z" fill="#856446"/><path d="M903.9 550.9L912.4 561.1L922.8 552.5L914.3 542.3z" fill="#8a6a4c"/><path d="M914.3 542.3L922.8 552.5L933.2 543.9L924.7 533.7z" fill="#8f6c4a"/><path d="M912.4 561.1L920.8 571.3L931.2 562.7L922.8 552.5z" fill="#8f6c4a"/><path d="M922.8 552.5L931.2 562.7L941.6 554.1L933.2 543.9z" fill="#856446"/><path d="M920.8 571.3L929.2 581.5L939.6 572.9L931.2 562.7z" fill="#8f6c4a"/><path d="M931.2 562.7L939.6 572.9L950 564.3L941.6 554.1z" fill="#93714f"/><path d="M929.2 581.5L937.7 591.8L948.1 583.2L939.6 572.9z" fill="#5d3d27"/><path d="M939.6 572.9L948.1 583.2L958.5 574.6L950 564.3z" fill="#8a6a4c"/><path d="M937.7 591.8L946.1 602L956.5 593.4L948.1 583.2z" fill="#5d3d27"/><path d="M948.1 583.2L956.5 593.4L966.9 584.8L958.5 574.6z" fill="#8a6a4c"/><path d="M946.1 602L954.5 612.2L964.9 603.6L956.5 593.4z" fill="#5d3d27"/><path d="M956.5 593.4L964.9 603.6L975.4 595L966.9 584.8z" fill="#856446"/><path d="M954.5 612.2L963 622.4L973.4 613.8L964.9 603.6z" fill="#74543a"/><path d="M964.9 603.6L973.4 613.8L983.8 605.2L975.4 595z" fill="#93714f"/><path d="M963 622.4L971.4 632.6L981.8 624L973.4 613.8z" fill="#977553"/><path d="M973.4 613.8L981.8 624L992.2 615.4L983.8 605.2z" fill="#9c7b58"/><path d="M971.4 632.6L979.9 642.8L990.3 634.2L981.8 624z" fill="#9c7b58"/><path d="M981.8 624L990.3 634.2L1000.7 625.6L992.2 615.4z" fill="#9c7b58"/><path d="M979.9 642.8L988.3 653L998.7 644.4L990.3 634.2z" fill="#977553"/><path d="M990.3 634.2L998.7 644.4L1009.1 635.8L1000.7 625.6z" fill="#977553"/><path d="M988.3 653L996.7 663.2L1007.1 654.6L998.7 644.4z" fill="#74543a"/><path d="M998.7 644.4L1007.1 654.6L1017.5 646L1009.1 635.8z" fill="#8f6c4a"/><path d="M996.7 663.2L1005.2 673.4L1015.6 664.8L1007.1 654.6z" fill="#7d5d42"/><path d="M1007.1 654.6L1015.6 664.8L1026 656.2L1017.5 646z" fill="#80603f"/><path d="M1005.2 673.4L1013.6 683.6L1024 675L1015.6 664.8z" fill="#5d3d27"/><path d="M1015.6 664.8L1024 675L1034.4 666.4L1026 656.2z" fill="#93714f"/><path d="M964.2 623.9L1013.6 683.6L1034.4 666.4L985.1 606.7z" fill="#ff00ff"/><path d="M669.4 636.9L709.4 587.5L728.7 607.5L689 653L677 645z" fill="#ff00ff"/><path d="M754 655.9L756 650L1000.9 381.8L1007 378.9L1027 397.1L774 674.1z" fill="url(#sideg)"/><path d="M774 674.1L783 664.2L773 655.1L764 665z" fill="#856446"/><path d="M764 665L773 655.1L763.1 646L754 655.9z" fill="#74543a"/><path d="M783 664.2L792 654.3L782.1 645.2L773 655.1z" fill="#8a6a4c"/><path d="M773 655.1L782.1 645.2L772.1 636.1L763.1 646z" fill="#5d3d27"/><path d="M792 654.3L801.1 644.4L791.1 635.3L782.1 645.2z" fill="#5d3d27"/><path d="M782.1 645.2L791.1 635.3L781.1 626.2L772.1 636.1z" fill="#6b4a31"/><path d="M801.1 644.4L810.1 634.5L800.1 625.4L791.1 635.3z" fill="#856446"/><path d="M791.1 635.3L800.1 625.4L790.2 616.3L781.1 626.2z" fill="#5d3d27"/><path d="M810.1 634.5L819.1 624.6L809.2 615.5L800.1 625.4z" fill="#80603f"/><path d="M800.1 625.4L809.2 615.5L799.2 606.4L790.2 616.3z" fill="#856446"/><path d="M819.1 624.6L828.2 614.7L818.2 605.6L809.2 615.5z" fill="#856446"/><path d="M809.2 615.5L818.2 605.6L808.2 596.5L799.2 606.4z" fill="#8f6c4a"/><path d="M828.2 614.7L837.2 604.9L827.2 595.8L818.2 605.6z" fill="#977553"/><path d="M818.2 605.6L827.2 595.8L817.3 586.6L808.2 596.5z" fill="#856446"/><path d="M837.2 604.9L846.3 595L836.3 585.9L827.2 595.8z" fill="#9c7b58"/><path d="M827.2 595.8L836.3 585.9L826.3 576.8L817.3 586.6z" fill="#856446"/><path d="M846.3 595L855.3 585.1L845.3 576L836.3 585.9z" fill="#a38160"/><path d="M836.3 585.9L845.3 576L835.4 566.9L826.3 576.8z" fill="#8a6a4c"/><path d="M855.3 585.1L864.3 575.2L854.4 566.1L845.3 576z" fill="#93714f"/><path d="M845.3 576L854.4 566.1L844.4 557L835.4 566.9z" fill="#80603f"/><path d="M864.3 575.2L873.4 565.3L863.4 556.2L854.4 566.1z" fill="#74543a"/><path d="M854.4 566.1L863.4 556.2L853.4 547.1L844.4 557z" fill="#8f6c4a"/><path d="M873.4 565.3L882.4 555.4L872.4 546.3L863.4 556.2z" fill="#5d3d27"/><path d="M863.4 556.2L872.4 546.3L862.5 537.2L853.4 547.1z" fill="#80603f"/><path d="M882.4 555.4L891.4 545.5L881.5 536.4L872.4 546.3z" fill="#7d5d42"/><path d="M872.4 546.3L881.5 536.4L871.5 527.3L862.5 537.2z" fill="#8a6a4c"/><path d="M891.4 545.5L900.5 535.6L890.5 526.5L881.5 536.4z" fill="#5d3d27"/><path d="M881.5 536.4L890.5 526.5L880.5 517.4L871.5 527.3z" fill="#977553"/><path d="M900.5 535.6L909.5 525.7L899.5 516.6L890.5 526.5z" fill="#93714f"/><path d="M890.5 526.5L899.5 516.6L889.6 507.5L880.5 517.4z" fill="#977553"/><path d="M909.5 525.7L918.5 515.8L908.6 506.7L899.5 516.6z" fill="#9c7b58"/><path d="M899.5 516.6L908.6 506.7L898.6 497.6L889.6 507.5z" fill="#7d5d42"/><path d="M918.5 515.8L927.6 505.9L917.6 496.8L908.6 506.7z" fill="#a38160"/><path d="M908.6 506.7L917.6 496.8L907.6 487.7L898.6 497.6z" fill="#6b4a31"/><path d="M927.6 505.9L936.6 496L926.6 486.9L917.6 496.8z" fill="#a38160"/><path d="M917.6 496.8L926.6 486.9L916.7 477.8L907.6 487.7z" fill="#856446"/><path d="M936.6 496L945.6 486.1L935.7 477L926.6 486.9z" fill="#93714f"/><path d="M926.6 486.9L935.7 477L925.7 467.9L916.7 477.8z" fill="#856446"/><path d="M945.6 486.1L954.7 476.2L944.7 467.1L935.7 477z" fill="#9c7b58"/><path d="M935.7 477L944.7 467.1L934.7 458L925.7 467.9z" fill="#8a6a4c"/><path d="M954.7 476.2L963.7 466.4L953.8 457.2L944.7 467.1z" fill="#856446"/><path d="M944.7 467.1L953.8 457.2L943.8 448.1L934.7 458z" fill="#93714f"/><path d="M963.7 466.4L972.8 456.5L962.8 447.4L953.8 457.2z" fill="#8a6a4c"/><path d="M953.8 457.2L962.8 447.4L952.8 438.3L943.8 448.1z" fill="#7d5d42"/><path d="M972.8 456.5L981.8 446.6L971.8 437.5L962.8 447.4z" fill="#8a6a4c"/><path d="M962.8 447.4L971.8 437.5L961.9 428.4L952.8 438.3z" fill="#74543a"/><path d="M981.8 446.6L990.8 436.7L980.9 427.6L971.8 437.5z" fill="#8f6c4a"/><path d="M971.8 437.5L980.9 427.6L970.9 418.5L961.9 428.4z" fill="#7d5d42"/><path d="M990.8 436.7L999.9 426.8L989.9 417.7L980.9 427.6z" fill="#93714f"/><path d="M980.9 427.6L989.9 417.7L979.9 408.6L970.9 418.5z" fill="#5d3d27"/><path d="M999.9 426.8L1008.9 416.9L998.9 407.8L989.9 417.7z" fill="#80603f"/><path d="M989.9 417.7L998.9 407.8L989 398.7L979.9 408.6z" fill="#5d3d27"/><path d="M1008.9 416.9L1017.9 407L1008 397.9L998.9 407.8z" fill="#856446"/><path d="M998.9 407.8L1008 397.9L998 388.8L989 398.7z" fill="#93714f"/><path d="M1017.9 407L1027 397.1L1017 388L1008 397.9z" fill="#9c7b58"/><path d="M1008 397.9L1017 388L1007 378.9L998 388.8z" fill="#93714f"/><path d="M775.9 282.4L797.1 265.6L1018.6 543.6L997.4 560.4L991.6 557.5L777.2 288.4z" fill="url(#sideg)"/><path d="M882.3 275.9L884.5 269.5L905.5 252.5L1029.5 404.5L1008.5 421.5L1002.4 423.1z" fill="url(#sideg)"/><path d="M775.9 282.4L784.1 292.7L794.7 284.3L786.5 274z" fill="#6b4a31"/><path d="M786.5 274L794.7 284.3L805.3 275.9L797.1 265.6z" fill="#977553"/><path d="M784.1 292.7L792.3 303L802.9 294.6L794.7 284.3z" fill="#74543a"/><path d="M794.7 284.3L802.9 294.6L813.5 286.2L805.3 275.9z" fill="#a38160"/><path d="M792.3 303L800.6 313.3L811.1 304.9L802.9 294.6z" fill="#74543a"/><path d="M802.9 294.6L811.1 304.9L821.7 296.5L813.5 286.2z" fill="#a38160"/><path d="M800.6 313.3L808.8 323.6L819.3 315.2L811.1 304.9z" fill="#5d3d27"/><path d="M811.1 304.9L819.3 315.2L829.9 306.8L821.7 296.5z" fill="#93714f"/><path d="M808.8 323.6L817 333.9L827.5 325.5L819.3 315.2z" fill="#6b4a31"/><path d="M819.3 315.2L827.5 325.5L838.1 317.1L829.9 306.8z" fill="#9c7b58"/><path d="M817 333.9L825.2 344.2L835.7 335.8L827.5 325.5z" fill="#7d5d42"/><path d="M827.5 325.5L835.7 335.8L846.3 327.4L838.1 317.1z" fill="#9c7b58"/><path d="M825.2 344.2L833.4 354.5L843.9 346.1L835.7 335.8z" fill="#74543a"/><path d="M835.7 335.8L843.9 346.1L854.5 337.7L846.3 327.4z" fill="#9c7b58"/><path d="M833.4 354.5L841.6 364.8L852.1 356.4L843.9 346.1z" fill="#5d3d27"/><path d="M843.9 346.1L852.1 356.4L862.7 348L854.5 337.7z" fill="#a38160"/><path d="M841.6 364.8L849.8 375.1L860.3 366.7L852.1 356.4z" fill="#74543a"/><path d="M852.1 356.4L860.3 366.7L870.9 358.3L862.7 348z" fill="#93714f"/><path d="M849.8 375.1L858 385.4L868.5 377L860.3 366.7z" fill="#74543a"/><path d="M860.3 366.7L868.5 377L879.1 368.6L870.9 358.3z" fill="#977553"/><path d="M858 385.4L866.2 395.7L876.7 387.3L868.5 377z" fill="#977553"/><path d="M868.5 377L876.7 387.3L887.3 378.8L879.1 368.6z" fill="#a38160"/><path d="M866.2 395.7L874.4 406L884.9 397.6L876.7 387.3z" fill="#a38160"/><path d="M876.7 387.3L884.9 397.6L895.5 389.1L887.3 378.8z" fill="#93714f"/><path d="M874.4 406L882.6 416.3L893.1 407.9L884.9 397.6z" fill="#93714f"/><path d="M884.9 397.6L893.1 407.9L903.7 399.4L895.5 389.1z" fill="#856446"/><path d="M882.6 416.3L890.8 426.6L901.4 418.1L893.1 407.9z" fill="#977553"/><path d="M893.1 407.9L901.4 418.1L911.9 409.7L903.7 399.4z" fill="#93714f"/><path d="M890.8 426.6L899 436.9L909.6 428.4L901.4 418.1z" fill="#93714f"/><path d="M901.4 418.1L909.6 428.4L920.1 420L911.9 409.7z" fill="#8a6a4c"/><path d="M899 436.9L907.2 447.2L917.8 438.7L909.6 428.4z" fill="#93714f"/><path d="M909.6 428.4L917.8 438.7L928.3 430.3L920.1 420z" fill="#8a6a4c"/><path d="M907.2 447.2L915.4 457.4L926 449L917.8 438.7z" fill="#a38160"/><path d="M917.8 438.7L926 449L936.5 440.6L928.3 430.3z" fill="#93714f"/><path d="M915.4 457.4L923.6 467.7L934.2 459.3L926 449z" fill="#8f6c4a"/><path d="M926 449L934.2 459.3L944.7 450.9L936.5 440.6z" fill="#93714f"/><path d="M923.6 467.7L931.8 478L942.4 469.6L934.2 459.3z" fill="#93714f"/><path d="M934.2 459.3L942.4 469.6L952.9 461.2L944.7 450.9z" fill="#856446"/><path d="M931.8 478L940 488.3L950.6 479.9L942.4 469.6z" fill="#8a6a4c"/><path d="M942.4 469.6L950.6 479.9L961.1 471.5L952.9 461.2z" fill="#8a6a4c"/><path d="M940 488.3L948.2 498.6L958.8 490.2L950.6 479.9z" fill="#856446"/><path d="M950.6 479.9L958.8 490.2L969.3 481.8L961.1 471.5z" fill="#8f6c4a"/><path d="M948.2 498.6L956.4 508.9L967 500.5L958.8 490.2z" fill="#856446"/><path d="M958.8 490.2L967 500.5L977.5 492.1L969.3 481.8z" fill="#8f6c4a"/><path d="M956.4 508.9L964.6 519.2L975.2 510.8L967 500.5z" fill="#856446"/><path d="M967 500.5L975.2 510.8L985.7 502.4L977.5 492.1z" fill="#8a6a4c"/><path d="M964.6 519.2L972.8 529.5L983.4 521.1L975.2 510.8z" fill="#93714f"/><path d="M975.2 510.8L983.4 521.1L993.9 512.7L985.7 502.4z" fill="#8f6c4a"/><path d="M972.8 529.5L981 539.8L991.6 531.4L983.4 521.1z" fill="#8f6c4a"/><path d="M983.4 521.1L991.6 531.4L1002.2 523L993.9 512.7z" fill="#93714f"/><path d="M981 539.8L989.2 550.1L999.8 541.7L991.6 531.4z" fill="#80603f"/><path d="M991.6 531.4L999.8 541.7L1010.4 533.3L1002.2 523z" fill="#856446"/><path d="M989.2 550.1L997.4 560.4L1008 552L999.8 541.7z" fill="#977553"/><path d="M999.8 541.7L1008 552L1018.6 543.6L1010.4 533.3z" fill="#8a6a4c"/><path d="M884.5 269.5L892.8 279.7L903.3 271.1L895 261z" fill="#80603f"/><path d="M895 261L903.3 271.1L913.7 262.6L905.5 252.5z" fill="#5d3d27"/><path d="M892.8 279.7L901.1 289.8L911.5 281.3L903.3 271.1z" fill="#8a6a4c"/><path d="M903.3 271.1L911.5 281.3L922 272.7L913.7 262.6z" fill="#7d5d42"/><path d="M901.1 289.8L909.3 299.9L919.8 291.4L911.5 281.3z" fill="#80603f"/><path d="M911.5 281.3L919.8 291.4L930.3 282.9L922 272.7z" fill="#7d5d42"/><path d="M909.3 299.9L917.6 310.1L928.1 301.5L919.8 291.4z" fill="#93714f"/><path d="M919.8 291.4L928.1 301.5L938.5 293L930.3 282.9z" fill="#8f6c4a"/><path d="M917.6 310.1L925.9 320.2L936.3 311.7L928.1 301.5z" fill="#8f6c4a"/><path d="M928.1 301.5L936.3 311.7L946.8 303.1L938.5 293z" fill="#8f6c4a"/><path d="M925.9 320.2L934.1 330.3L944.6 321.8L936.3 311.7z" fill="#80603f"/><path d="M936.3 311.7L944.6 321.8L955.1 313.3L946.8 303.1z" fill="#8a6a4c"/><path d="M934.1 330.3L942.4 340.5L952.9 331.9L944.6 321.8z" fill="#856446"/><path d="M944.6 321.8L952.9 331.9L963.3 323.4L955.1 313.3z" fill="#80603f"/><path d="M942.4 340.5L950.7 350.6L961.1 342.1L952.9 331.9z" fill="#80603f"/><path d="M952.9 331.9L961.1 342.1L971.6 333.5L963.3 323.4z" fill="#74543a"/><path d="M950.7 350.6L958.9 360.7L969.4 352.2L961.1 342.1z" fill="#856446"/><path d="M961.1 342.1L969.4 352.2L979.9 343.7L971.6 333.5z" fill="#a38160"/><path d="M958.9 360.7L967.2 370.9L977.7 362.3L969.4 352.2z" fill="#6b4a31"/><path d="M969.4 352.2L977.7 362.3L988.1 353.8L979.9 343.7z" fill="#9c7b58"/><path d="M967.2 370.9L975.5 381L985.9 372.5L977.7 362.3z" fill="#6b4a31"/><path d="M977.7 362.3L985.9 372.5L996.4 363.9L988.1 353.8z" fill="#8f6c4a"/><path d="M975.5 381L983.7 391.1L994.2 382.6L985.9 372.5z" fill="#5d3d27"/><path d="M985.9 372.5L994.2 382.6L1004.7 374.1L996.4 363.9z" fill="#5d3d27"/><path d="M983.7 391.1L992 401.3L1002.5 392.7L994.2 382.6z" fill="#5d3d27"/><path d="M994.2 382.6L1002.5 392.7L1012.9 384.2L1004.7 374.1z" fill="#6b4a31"/><path d="M992 401.3L1000.3 411.4L1010.7 402.9L1002.5 392.7z" fill="#6b4a31"/><path d="M1002.5 392.7L1010.7 402.9L1021.2 394.3L1012.9 384.2z" fill="#8a6a4c"/><path d="M1000.3 411.4L1008.5 421.5L1019 413L1010.7 402.9z" fill="#8f6c4a"/><path d="M1010.7 402.9L1019 413L1029.5 404.5L1021.2 394.3z" fill="#74543a"/><path d="M849.9 660.6L1004.4 489.9L1010.6 490.6L1031.4 509.4L871 685.1L851 666.9z" fill="url(#sideg)"/><path d="M871 685.1L879.9 675.3L869.9 666.2L861 676z" fill="#8f6c4a"/><path d="M861 676L869.9 666.2L859.9 657.1L851 666.9z" fill="#80603f"/><path d="M879.9 675.3L888.8 665.6L878.8 656.4L869.9 666.2z" fill="#80603f"/><path d="M869.9 666.2L878.8 656.4L868.7 647.3L859.9 657.1z" fill="#8f6c4a"/><path d="M888.8 665.6L897.7 655.8L887.7 646.7L878.8 656.4z" fill="#8f6c4a"/><path d="M878.8 656.4L887.7 646.7L877.6 637.5L868.7 647.3z" fill="#80603f"/><path d="M897.7 655.8L906.6 646L896.6 636.9L887.7 646.7z" fill="#93714f"/><path d="M887.7 646.7L896.6 636.9L886.5 627.7L877.6 637.5z" fill="#93714f"/><path d="M906.6 646L915.5 636.3L905.4 627.1L896.6 636.9z" fill="#8f6c4a"/><path d="M896.6 636.9L905.4 627.1L895.4 617.9L886.5 627.7z" fill="#977553"/><path d="M915.5 636.3L924.4 626.5L914.3 617.3L905.4 627.1z" fill="#80603f"/><path d="M905.4 627.1L914.3 617.3L904.2 608.1L895.4 617.9z" fill="#9c7b58"/><path d="M924.4 626.5L933.4 616.8L923.2 607.6L914.3 617.3z" fill="#a38160"/><path d="M914.3 617.3L923.2 607.6L913.1 598.3L904.2 608.1z" fill="#8a6a4c"/><path d="M933.4 616.8L942.3 607L932.1 597.8L923.2 607.6z" fill="#9c7b58"/><path d="M923.2 607.6L932.1 597.8L922 588.5L913.1 598.3z" fill="#8a6a4c"/><path d="M942.3 607L951.2 597.2L941 588L932.1 597.8z" fill="#9c7b58"/><path d="M932.1 597.8L941 588L930.8 578.8L922 588.5z" fill="#8f6c4a"/><path d="M951.2 597.2L960.1 587.5L949.9 578.2L941 588z" fill="#977553"/><path d="M941 588L949.9 578.2L939.7 569L930.8 578.8z" fill="#8a6a4c"/><path d="M960.1 587.5L969 577.7L958.8 568.4L949.9 578.2z" fill="#9c7b58"/><path d="M949.9 578.2L958.8 568.4L948.6 559.2L939.7 569z" fill="#856446"/><path d="M969 577.7L977.9 568L967.7 558.7L958.8 568.4z" fill="#856446"/><path d="M958.8 568.4L967.7 558.7L957.4 549.4L948.6 559.2z" fill="#93714f"/><path d="M977.9 568L986.8 558.2L976.6 548.9L967.7 558.7z" fill="#80603f"/><path d="M967.7 558.7L976.6 548.9L966.3 539.6L957.4 549.4z" fill="#a38160"/><path d="M986.8 558.2L995.7 548.5L985.4 539.1L976.6 548.9z" fill="#856446"/><path d="M976.6 548.9L985.4 539.1L975.2 529.8L966.3 539.6z" fill="#9c7b58"/><path d="M995.7 548.5L1004.6 538.7L994.3 529.3L985.4 539.1z" fill="#856446"/><path d="M985.4 539.1L994.3 529.3L984 520L975.2 529.8z" fill="#9c7b58"/><path d="M1004.6 538.7L1013.5 528.9L1003.2 519.6L994.3 529.3z" fill="#80603f"/><path d="M994.3 529.3L1003.2 519.6L992.9 510.2L984 520z" fill="#9c7b58"/><path d="M1013.5 528.9L1022.4 519.2L1012.1 509.8L1003.2 519.6z" fill="#93714f"/><path d="M1003.2 519.6L1012.1 509.8L1001.8 500.4L992.9 510.2z" fill="#6b4a31"/><path d="M1022.4 519.2L1031.4 509.4L1021 500L1012.1 509.8z" fill="#93714f"/><path d="M1012.1 509.8L1021 500L1010.6 490.6L1001.8 500.4z" fill="#74543a"/><path d="M604.4 260L617.9 259.8L618.1 273.8L604.6 274z" fill="#8f6c4a"/><path d="M604.6 274L618.1 273.8L618.3 287.8L604.8 288z" fill="#8a6a4c"/><path d="M617.9 259.8L631.5 259.5L631.7 273.6L618.1 273.8z" fill="#6b4a31"/><path d="M618.1 273.8L631.7 273.6L631.8 287.6L618.3 287.8z" fill="#74543a"/><path d="M631.5 259.5L645.1 259.3L645.2 273.4L631.7 273.6z" fill="#93714f"/><path d="M631.7 273.6L645.2 273.4L645.4 287.4L631.8 287.6z" fill="#856446"/><path d="M645.1 259.3L658.7 259L658.8 273.1L645.2 273.4z" fill="#5d3d27"/><path d="M645.2 273.4L658.8 273.1L659 287.2L645.4 287.4z" fill="#74543a"/><path d="M658.7 259L672.4 258.8L672.5 272.9L658.8 273.1z" fill="#93714f"/><path d="M658.8 273.1L672.5 272.9L672.6 287L659 287.2z" fill="#a38160"/><path d="M672.4 258.8L686.1 258.5L686.2 272.7L672.5 272.9z" fill="#93714f"/><path d="M672.5 272.9L686.2 272.7L686.2 286.8L672.6 287z" fill="#93714f"/><path d="M686.1 258.5L699.8 258.3L699.9 272.5L686.2 272.7z" fill="#977553"/><path d="M686.2 272.7L699.9 272.5L699.9 286.6L686.2 286.8z" fill="#9c7b58"/><path d="M699.8 258.3L713.6 258.1L713.6 272.2L699.9 272.5z" fill="#93714f"/><path d="M699.9 272.5L713.6 272.2L713.6 286.4L699.9 286.6z" fill="#a38160"/><path d="M713.6 258.1L727.4 257.8L727.4 272L713.6 272.2z" fill="#856446"/><path d="M713.6 272.2L727.4 272L727.4 286.2L713.6 286.4z" fill="#856446"/><path d="M727.4 257.8L741.3 257.6L741.2 271.8L727.4 272z" fill="#74543a"/><path d="M727.4 272L741.2 271.8L741.2 286L727.4 286.2z" fill="#6b4a31"/><path d="M741.3 257.6L755.2 257.3L755.1 271.6L741.2 271.8z" fill="#9c7b58"/><path d="M741.2 271.8L755.1 271.6L755 285.8L741.2 286z" fill="#977553"/><path d="M755.2 257.3L769.1 257.1L769 271.3L755.1 271.6z" fill="#5d3d27"/><path d="M755.1 271.6L769 271.3L768.9 285.5L755 285.8z" fill="#7d5d42"/><path d="M769.1 257.1L783 256.8L782.9 271.1L769 271.3z" fill="#93714f"/><path d="M769 271.3L782.9 271.1L782.8 285.3L768.9 285.5z" fill="#977553"/><path d="M783 256.8L797 256.6L796.8 270.9L782.9 271.1z" fill="#977553"/><path d="M782.9 271.1L796.8 270.9L796.7 285.1L782.8 285.3z" fill="#a38160"/><path d="M797 256.6L811 256.3L810.8 270.6L796.8 270.9z" fill="#8a6a4c"/><path d="M796.8 270.9L810.8 270.6L810.7 284.9L796.7 285.1z" fill="#80603f"/><path d="M811 256.3L825.1 256.1L824.9 270.4L810.8 270.6z" fill="#9c7b58"/><path d="M810.8 270.6L824.9 270.4L824.7 284.7L810.7 284.9z" fill="#977553"/><path d="M825.1 256.1L839.2 255.8L838.9 270.2L824.9 270.4z" fill="#6b4a31"/><path d="M824.9 270.4L838.9 270.2L838.7 284.5L824.7 284.7z" fill="#6b4a31"/><path d="M839.2 255.8L853.3 255.6L853 270L838.9 270.2z" fill="#93714f"/><path d="M838.9 270.2L853 270L852.8 284.3L838.7 284.5z" fill="#856446"/><path d="M853.3 255.6L867.5 255.3L867.2 269.7L853 270z" fill="#8a6a4c"/><path d="M853 270L867.2 269.7L866.9 284.1L852.8 284.3z" fill="#8f6c4a"/><path d="M867.5 255.3L881.7 255.1L881.4 269.5L867.2 269.7z" fill="#93714f"/><path d="M867.2 269.7L881.4 269.5L881 283.8L866.9 284.1z" fill="#93714f"/><path d="M881.7 255.1L895.9 254.8L895.6 269.3L881.4 269.5z" fill="#8a6a4c"/><path d="M881.4 269.5L895.6 269.3L895.2 283.6L881 283.8z" fill="#8f6c4a"/><path d="M895.9 254.8L910.2 254.6L909.8 269L895.6 269.3z" fill="#93714f"/><path d="M895.6 269.3L909.8 269L909.4 283.4L895.2 283.6z" fill="#8a6a4c"/><path d="M910.2 254.6L924.5 254.3L924.1 268.8L909.8 269z" fill="#9c7b58"/><path d="M909.8 269L924.1 268.8L923.7 283.2L909.4 283.4z" fill="#977553"/><path d="M924.5 254.3L938.8 254.1L938.4 268.5L924.1 268.8z" fill="#93714f"/><path d="M924.1 268.8L938.4 268.5L938 283L923.7 283.2z" fill="#856446"/><path d="M938.8 254.1L953.2 253.8L952.8 268.3L938.4 268.5z" fill="#80603f"/><path d="M938.4 268.5L952.8 268.3L952.3 282.8L938 283z" fill="#93714f"/><path d="M953.2 253.8L967.7 253.6L967.2 268.1L952.8 268.3z" fill="#8f6c4a"/><path d="M952.8 268.3L967.2 268.1L966.7 282.5L952.3 282.8z" fill="#8f6c4a"/><path d="M967.7 253.6L982.1 253.3L981.6 267.8L967.2 268.1z" fill="#80603f"/><path d="M967.2 268.1L981.6 267.8L981.1 282.3L966.7 282.5z" fill="#8f6c4a"/><path d="M982.1 253.3L996.6 253L996.1 267.6L981.6 267.8z" fill="#a38160"/><path d="M981.6 267.8L996.1 267.6L995.5 282.1L981.1 282.3z" fill="#a38160"/><path d="M996.6 253L1011.2 252.8L1010.6 267.4L996.1 267.6z" fill="#8a6a4c"/><path d="M996.1 267.6L1010.6 267.4L1010 281.9L995.5 282.1z" fill="#8f6c4a"/><path d="M1011.2 252.8L1025.7 252.5L1025.1 267.1L1010.6 267.4z" fill="#6b4a31"/><path d="M1010.6 267.4L1025.1 267.1L1024.5 281.7L1010 281.9z" fill="#5d3d27"/><path d="M1025.7 252.5L1040.3 252.3L1039.7 266.9L1025.1 267.1z" fill="#7d5d42"/><path d="M1025.1 267.1L1039.7 266.9L1039.1 281.4L1024.5 281.7z" fill="#7d5d42"/><path d="M1040.3 252.3L1055 252L1054.3 266.6L1039.7 266.9z" fill="#93714f"/><path d="M1039.7 266.9L1054.3 266.6L1053.7 281.2L1039.1 281.4z" fill="#856446"/><path d="M604.8 288L618.3 287.8L618.5 301.8L605 302z" fill="#5d3d27"/><path d="M605 302L618.5 301.8L618.7 315.7L605.2 315.8z" fill="#74543a"/><path d="M605.2 315.8L618.7 315.7L618.9 329.5L605.5 329.7z" fill="#74543a"/><path d="M605.5 329.7L618.9 329.5L619 343.3L605.7 343.5z" fill="#80603f"/><path d="M605.7 343.5L619 343.3L619.2 357.1L605.9 357.2z" fill="#9c7b58"/><path d="M605.9 357.2L619.2 357.1L619.4 370.8L606.1 370.9z" fill="#9c7b58"/><path d="M606.1 370.9L619.4 370.8L619.6 384.4L606.3 384.5z" fill="#74543a"/><path d="M606.3 384.5L619.6 384.4L619.8 398L606.5 398.1z" fill="#5d3d27"/><path d="M606.5 398.1L619.8 398L619.9 411.5L606.7 411.6z" fill="#74543a"/><path d="M606.7 411.6L619.9 411.5L620.1 425L606.9 425.1z" fill="#80603f"/><path d="M606.9 425.1L620.1 425L620.3 438.5L607.1 438.5z" fill="#93714f"/><path d="M607.1 438.5L620.3 438.5L620.5 451.9L607.3 451.9z" fill="#8f6c4a"/><path d="M607.3 451.9L620.5 451.9L620.7 465.2L607.5 465.2z" fill="#8a6a4c"/><path d="M607.5 465.2L620.7 465.2L620.8 478.5L607.7 478.5z" fill="#80603f"/><path d="M607.7 478.5L620.8 478.5L621 491.7L607.9 491.7z" fill="#93714f"/><path d="M607.9 491.7L621 491.7L621.2 504.9L608.1 504.9z" fill="#80603f"/><path d="M608.1 504.9L621.2 504.9L621.4 518.1L608.3 518z" fill="#8f6c4a"/><path d="M608.3 518L621.4 518.1L621.5 531.2L608.5 531.1z" fill="#8a6a4c"/><path d="M608.5 531.1L621.5 531.2L621.7 544.2L608.7 544.1z" fill="#856446"/><path d="M608.7 544.1L621.7 544.2L621.9 557.3L608.9 557.1z" fill="#8a6a4c"/><path d="M608.9 557.1L621.9 557.3L622 570.2L609.1 570.1z" fill="#93714f"/><path d="M609.1 570.1L622 570.2L622.2 583.1L609.3 583z" fill="#856446"/><path d="M609.3 583L622.2 583.1L622.4 596L609.5 595.8z" fill="#74543a"/><path d="M609.5 595.8L622.4 596L622.6 608.8L609.7 608.6z" fill="#7d5d42"/><path d="M609.7 608.6L622.6 608.8L622.7 621.6L609.8 621.4z" fill="#a38160"/><path d="M609.8 621.4L622.7 621.6L622.9 634.3L610 634.1z" fill="#a38160"/><path d="M610 634.1L622.9 634.3L623.1 647L610.2 646.8z" fill="#a38160"/><path d="M610.2 646.8L623.1 647L623.2 659.6L610.4 659.4z" fill="#a38160"/><path d="M610.4 659.4L623.2 659.6L623.4 672.2L610.6 672z" fill="#93714f"/><path d="M610.6 672L623.4 672.2L623.6 684.8L610.8 684.5z" fill="#977553"/><path d="M618.3 287.8L631.8 287.6L632 301.6L618.5 301.8z" fill="#93714f"/><path d="M618.5 301.8L632 301.6L632.1 315.5L618.7 315.7z" fill="#80603f"/><path d="M618.7 315.7L632.1 315.5L632.3 329.4L618.9 329.5z" fill="#80603f"/><path d="M618.9 329.5L632.3 329.4L632.5 343.2L619 343.3z" fill="#9c7b58"/><path d="M619 343.3L632.5 343.2L632.6 356.9L619.2 357.1z" fill="#93714f"/><path d="M619.2 357.1L632.6 356.9L632.8 370.7L619.4 370.8z" fill="#a38160"/><path d="M619.4 370.8L632.8 370.7L632.9 384.3L619.6 384.4z" fill="#977553"/><path d="M619.6 384.4L632.9 384.3L633.1 397.9L619.8 398z" fill="#a38160"/><path d="M619.8 398L633.1 397.9L633.2 411.5L619.9 411.5z" fill="#a38160"/><path d="M619.9 411.5L633.2 411.5L633.4 425L620.1 425z" fill="#a38160"/><path d="M620.1 425L633.4 425L633.5 438.5L620.3 438.5z" fill="#9c7b58"/><path d="M620.3 438.5L633.5 438.5L633.7 451.9L620.5 451.9z" fill="#8f6c4a"/><path d="M620.5 451.9L633.7 451.9L633.9 465.2L620.7 465.2z" fill="#8a6a4c"/><path d="M620.7 465.2L633.9 465.2L634 478.5L620.8 478.5z" fill="#8a6a4c"/><path d="M620.8 478.5L634 478.5L634.2 491.8L621 491.7z" fill="#8a6a4c"/><path d="M621 491.7L634.2 491.8L634.3 505L621.2 504.9z" fill="#977553"/><path d="M621.2 504.9L634.3 505L634.5 518.2L621.4 518.1z" fill="#a38160"/><path d="M621.4 518.1L634.5 518.2L634.6 531.3L621.5 531.2z" fill="#9c7b58"/><path d="M621.5 531.2L634.6 531.3L634.8 544.4L621.7 544.2z" fill="#93714f"/><path d="M621.7 544.2L634.8 544.4L634.9 557.4L621.9 557.3z" fill="#9c7b58"/><path d="M621.9 557.3L634.9 557.4L635.1 570.4L622 570.2z" fill="#9c7b58"/><path d="M622 570.2L635.1 570.4L635.2 583.3L622.2 583.1z" fill="#977553"/><path d="M622.2 583.1L635.2 583.3L635.4 596.2L622.4 596z" fill="#93714f"/><path d="M622.4 596L635.4 596.2L635.5 609L622.6 608.8z" fill="#9c7b58"/><path d="M622.6 608.8L635.5 609L635.6 621.8L622.7 621.6z" fill="#a38160"/><path d="M622.7 621.6L635.6 621.8L635.8 634.5L622.9 634.3z" fill="#9c7b58"/><path d="M622.9 634.3L635.8 634.5L635.9 647.2L623.1 647z" fill="#a38160"/><path d="M623.1 647L635.9 647.2L636.1 659.9L623.2 659.6z" fill="#977553"/><path d="M623.2 659.6L636.1 659.9L636.2 672.5L623.4 672.2z" fill="#977553"/><path d="M623.4 672.2L636.2 672.5L636.4 685.1L623.6 684.8z" fill="#977553"/><path d="M1024.5 281.7L1039.1 281.4L1038.5 296L1023.9 296.2z" fill="#7d5d42"/><path d="M1023.9 296.2L1038.5 296L1037.8 310.4L1023.3 310.6z" fill="#6b4a31"/><path d="M1023.3 310.6L1037.8 310.4L1037.2 324.8L1022.7 325z" fill="#5d3d27"/><path d="M1022.7 325L1037.2 324.8L1036.6 339.1L1022.1 339.3z" fill="#6b4a31"/><path d="M1022.1 339.3L1036.6 339.1L1036 353.4L1021.6 353.6z" fill="#7d5d42"/><path d="M1021.6 353.6L1036 353.4L1035.3 367.7L1021 367.8z" fill="#8a6a4c"/><path d="M1021 367.8L1035.3 367.7L1034.7 381.8L1020.4 381.9z" fill="#856446"/><path d="M1020.4 381.9L1034.7 381.8L1034.1 396L1019.8 396z" fill="#80603f"/><path d="M1019.8 396L1034.1 396L1033.5 410L1019.2 410.1z" fill="#8a6a4c"/><path d="M1019.2 410.1L1033.5 410L1032.9 424L1018.6 424.1z" fill="#93714f"/><path d="M1018.6 424.1L1032.9 424L1032.3 438L1018.1 438z" fill="#7d5d42"/><path d="M1018.1 438L1032.3 438L1031.7 451.9L1017.5 451.9z" fill="#6b4a31"/><path d="M1017.5 451.9L1031.7 451.9L1031.1 465.7L1016.9 465.7z" fill="#74543a"/><path d="M1016.9 465.7L1031.1 465.7L1030.5 479.5L1016.3 479.5z" fill="#9c7b58"/><path d="M1016.3 479.5L1030.5 479.5L1029.9 493.3L1015.8 493.2z" fill="#9c7b58"/><path d="M1015.8 493.2L1029.9 493.3L1029.3 507L1015.2 506.9z" fill="#977553"/><path d="M1015.2 506.9L1029.3 507L1028.7 520.6L1014.6 520.5z" fill="#8f6c4a"/><path d="M1014.6 520.5L1028.7 520.6L1028.1 534.2L1014.1 534.1z" fill="#80603f"/><path d="M1014.1 534.1L1028.1 534.2L1027.5 547.8L1013.5 547.6z" fill="#93714f"/><path d="M1013.5 547.6L1027.5 547.8L1027 561.2L1013 561.1z" fill="#93714f"/><path d="M1013 561.1L1027 561.2L1026.4 574.7L1012.4 574.5z" fill="#856446"/><path d="M1012.4 574.5L1026.4 574.7L1025.8 588.1L1011.9 587.9z" fill="#856446"/><path d="M1011.9 587.9L1025.8 588.1L1025.2 601.4L1011.3 601.2z" fill="#8f6c4a"/><path d="M1011.3 601.2L1025.2 601.4L1024.6 614.7L1010.8 614.5z" fill="#8f6c4a"/><path d="M1010.8 614.5L1024.6 614.7L1024.1 627.9L1010.2 627.7z" fill="#7d5d42"/><path d="M1010.2 627.7L1024.1 627.9L1023.5 641.1L1009.7 640.9z" fill="#5d3d27"/><path d="M1009.7 640.9L1023.5 641.1L1022.9 654.3L1009.1 654z" fill="#7d5d42"/><path d="M1009.1 654L1022.9 654.3L1022.4 667.4L1008.6 667.1z" fill="#93714f"/><path d="M1008.6 667.1L1022.4 667.4L1021.8 680.4L1008 680.1z" fill="#9c7b58"/><path d="M1008 680.1L1021.8 680.4L1021.2 693.4L1007.5 693.1z" fill="#93714f"/><path d="M1039.1 281.4L1053.7 281.2L1053 295.8L1038.5 296z" fill="#80603f"/><path d="M1038.5 296L1053 295.8L1052.4 310.2L1037.8 310.4z" fill="#8f6c4a"/><path d="M1037.8 310.4L1052.4 310.2L1051.7 324.6L1037.2 324.8z" fill="#80603f"/><path d="M1037.2 324.8L1051.7 324.6L1051.1 339L1036.6 339.1z" fill="#8f6c4a"/><path d="M1036.6 339.1L1051.1 339L1050.4 353.3L1036 353.4z" fill="#93714f"/><path d="M1036 353.4L1050.4 353.3L1049.8 367.6L1035.3 367.7z" fill="#8a6a4c"/><path d="M1035.3 367.7L1049.8 367.6L1049.1 381.7L1034.7 381.8z" fill="#856446"/><path d="M1034.7 381.8L1049.1 381.7L1048.5 395.9L1034.1 396z" fill="#93714f"/><path d="M1034.1 396L1048.5 395.9L1047.8 410L1033.5 410z" fill="#977553"/><path d="M1033.5 410L1047.8 410L1047.2 424L1032.9 424z" fill="#a38160"/><path d="M1032.9 424L1047.2 424L1046.6 438L1032.3 438z" fill="#93714f"/><path d="M1032.3 438L1046.6 438L1045.9 451.9L1031.7 451.9z" fill="#8f6c4a"/><path d="M1031.7 451.9L1045.9 451.9L1045.3 465.8L1031.1 465.7z" fill="#8f6c4a"/><path d="M1031.1 465.7L1045.3 465.8L1044.7 479.6L1030.5 479.5z" fill="#74543a"/><path d="M1030.5 479.5L1044.7 479.6L1044.1 493.3L1029.9 493.3z" fill="#74543a"/><path d="M1029.9 493.3L1044.1 493.3L1043.5 507.1L1029.3 507z" fill="#93714f"/><path d="M1029.3 507L1043.5 507.1L1042.8 520.7L1028.7 520.6z" fill="#8f6c4a"/><path d="M1028.7 520.6L1042.8 520.7L1042.2 534.3L1028.1 534.2z" fill="#977553"/><path d="M1028.1 534.2L1042.2 534.3L1041.6 547.9L1027.5 547.8z" fill="#977553"/><path d="M1027.5 547.8L1041.6 547.9L1041 561.4L1027 561.2z" fill="#a38160"/><path d="M1027 561.2L1041 561.4L1040.4 574.8L1026.4 574.7z" fill="#a38160"/><path d="M1026.4 574.7L1040.4 574.8L1039.8 588.2L1025.8 588.1z" fill="#977553"/><path d="M1025.8 588.1L1039.8 588.2L1039.2 601.6L1025.2 601.4z" fill="#9c7b58"/><path d="M1025.2 601.4L1039.2 601.6L1038.6 614.9L1024.6 614.7z" fill="#9c7b58"/><path d="M1024.6 614.7L1038.6 614.9L1038 628.2L1024.1 627.9z" fill="#a38160"/><path d="M1024.1 627.9L1038 628.2L1037.4 641.4L1023.5 641.1z" fill="#977553"/><path d="M1023.5 641.1L1037.4 641.4L1036.8 654.5L1022.9 654.3z" fill="#977553"/><path d="M1022.9 654.3L1036.8 654.5L1036.2 667.6L1022.4 667.4z" fill="#93714f"/><path d="M1022.4 667.4L1036.2 667.6L1035.6 680.7L1021.8 680.4z" fill="#8a6a4c"/><path d="M1021.8 680.4L1035.6 680.7L1035 693.7L1021.2 693.4z" fill="#856446"/><path d="M636.1 659.9L649 660.1L649.1 672.8L636.2 672.5z" fill="#93714f"/><path d="M636.2 672.5L649.1 672.8L649.2 685.3L636.4 685.1z" fill="#93714f"/><path d="M649 660.1L661.9 660.4L662 673L649.1 672.8z" fill="#93714f"/><path d="M649.1 672.8L662 673L662.1 685.6L649.2 685.3z" fill="#93714f"/><path d="M661.9 660.4L674.8 660.6L674.9 673.3L662 673z" fill="#93714f"/><path d="M662 673L674.9 673.3L674.9 685.9L662.1 685.6z" fill="#856446"/><path d="M674.8 660.6L687.8 660.9L687.8 673.6L674.9 673.3z" fill="#8f6c4a"/><path d="M674.9 673.3L687.8 673.6L687.9 686.2L674.9 685.9z" fill="#856446"/><path d="M687.8 660.9L700.8 661.1L700.8 673.8L687.8 673.6z" fill="#80603f"/><path d="M687.8 673.6L700.8 673.8L700.8 686.5L687.9 686.2z" fill="#8a6a4c"/><path d="M700.8 661.1L713.8 661.4L713.8 674.1L700.8 673.8z" fill="#80603f"/><path d="M700.8 673.8L713.8 674.1L713.8 686.7L700.8 686.5z" fill="#93714f"/><path d="M713.8 661.4L726.9 661.6L726.8 674.4L713.8 674.1z" fill="#80603f"/><path d="M713.8 674.1L726.8 674.4L726.8 687L713.8 686.7z" fill="#8f6c4a"/><path d="M726.9 661.6L739.9 661.9L739.9 674.6L726.8 674.4z" fill="#93714f"/><path d="M726.8 674.4L739.9 674.6L739.9 687.3L726.8 687z" fill="#8f6c4a"/><path d="M739.9 661.9L753.1 662.2L753 674.9L739.9 674.6z" fill="#8a6a4c"/><path d="M739.9 674.6L753 674.9L752.9 687.6L739.9 687.3z" fill="#80603f"/><path d="M753.1 662.2L766.2 662.4L766.1 675.2L753 674.9z" fill="#856446"/><path d="M753 674.9L766.1 675.2L766.1 687.9L752.9 687.6z" fill="#8a6a4c"/><path d="M766.2 662.4L779.4 662.7L779.3 675.4L766.1 675.2z" fill="#74543a"/><path d="M766.1 675.2L779.3 675.4L779.2 688.2L766.1 687.9z" fill="#5d3d27"/><path d="M779.4 662.7L792.6 662.9L792.5 675.7L779.3 675.4z" fill="#8f6c4a"/><path d="M779.3 675.4L792.5 675.7L792.4 688.4L779.2 688.2z" fill="#856446"/><path d="M792.6 662.9L805.9 663.2L805.7 676L792.5 675.7z" fill="#5d3d27"/><path d="M792.5 675.7L805.7 676L805.6 688.7L792.4 688.4z" fill="#5d3d27"/><path d="M805.9 663.2L819.2 663.4L819 676.2L805.7 676z" fill="#93714f"/><path d="M805.7 676L819 676.2L818.8 689L805.6 688.7z" fill="#a38160"/><path d="M819.2 663.4L832.5 663.7L832.3 676.5L819 676.2z" fill="#6b4a31"/><path d="M819 676.2L832.3 676.5L832.1 689.3L818.8 689z" fill="#7d5d42"/><path d="M832.5 663.7L845.8 663.9L845.6 676.8L832.3 676.5z" fill="#80603f"/><path d="M832.3 676.5L845.6 676.8L845.4 689.6L832.1 689.3z" fill="#8a6a4c"/><path d="M845.8 663.9L859.2 664.2L859 677.1L845.6 676.8z" fill="#a38160"/><path d="M845.6 676.8L859 677.1L858.7 689.9L845.4 689.6z" fill="#a38160"/><path d="M859.2 664.2L872.6 664.5L872.3 677.3L859 677.1z" fill="#8f6c4a"/><path d="M859 677.1L872.3 677.3L872.1 690.2L858.7 689.9z" fill="#93714f"/><path d="M872.6 664.5L886.1 664.7L885.8 677.6L872.3 677.3z" fill="#93714f"/><path d="M872.3 677.3L885.8 677.6L885.5 690.5L872.1 690.2z" fill="#80603f"/><path d="M886.1 664.7L899.6 665L899.2 677.9L885.8 677.6z" fill="#80603f"/><path d="M885.8 677.6L899.2 677.9L898.9 690.7L885.5 690.5z" fill="#93714f"/><path d="M899.6 665L913.1 665.2L912.7 678.2L899.2 677.9z" fill="#977553"/><path d="M899.2 677.9L912.7 678.2L912.4 691L898.9 690.7z" fill="#977553"/><path d="M913.1 665.2L926.6 665.5L926.2 678.4L912.7 678.2z" fill="#80603f"/><path d="M912.7 678.2L926.2 678.4L925.8 691.3L912.4 691z" fill="#8f6c4a"/><path d="M926.6 665.5L940.2 665.8L939.8 678.7L926.2 678.4z" fill="#74543a"/><path d="M926.2 678.4L939.8 678.7L939.4 691.6L925.8 691.3z" fill="#5d3d27"/><path d="M940.2 665.8L953.8 666L953.4 679L939.8 678.7z" fill="#8a6a4c"/><path d="M939.8 678.7L953.4 679L952.9 691.9L939.4 691.6z" fill="#93714f"/><path d="M953.8 666L967.4 666.3L967 679.3L953.4 679z" fill="#8a6a4c"/><path d="M953.4 679L967 679.3L966.5 692.2L952.9 691.9z" fill="#856446"/><path d="M967.4 666.3L981.1 666.6L980.6 679.6L967 679.3z" fill="#93714f"/><path d="M967 679.3L980.6 679.6L980.2 692.5L966.5 692.2z" fill="#9c7b58"/><path d="M981.1 666.6L994.8 666.8L994.3 679.8L980.6 679.6z" fill="#93714f"/><path d="M980.6 679.6L994.3 679.8L993.8 692.8L980.2 692.5z" fill="#93714f"/><path d="M994.8 666.8L1008.6 667.1L1008 680.1L994.3 679.8z" fill="#856446"/><path d="M994.3 679.8L1008 680.1L1007.5 693.1L993.8 692.8z" fill="#93714f"/><path d="M775.9 282.4L784.8 293.5L795.4 285.1L786.5 274z" fill="#80603f"/><path d="M786.5 274L795.4 285.1L805.9 276.7L797.1 265.6z" fill="#93714f"/><path d="M784.8 293.5L793.7 304.7L804.2 296.2L795.4 285.1z" fill="#80603f"/><path d="M795.4 285.1L804.2 296.2L814.8 287.8L805.9 276.7z" fill="#8f6c4a"/><path d="M793.7 304.7L802.5 315.8L813.1 307.4L804.2 296.2z" fill="#93714f"/><path d="M804.2 296.2L813.1 307.4L823.6 298.9L814.8 287.8z" fill="#9c7b58"/><path d="M884.5 269.5L892.8 279.7L903.3 271.1L895 261z" fill="#93714f"/><path d="M895 261L903.3 271.1L913.7 262.6L905.5 252.5z" fill="#a38160"/><path d="M892.8 279.7L901.1 289.8L911.5 281.3L903.3 271.1z" fill="#8f6c4a"/><path d="M903.3 271.1L911.5 281.3L922 272.7L913.7 262.6z" fill="#9c7b58"/><path d="M901.1 289.8L909.3 299.9L919.8 291.4L911.5 281.3z" fill="#93714f"/><path d="M911.5 281.3L919.8 291.4L930.3 282.9L922 272.7z" fill="#93714f"/><g opacity=".5"><path d="M1041.6 572.6L1033.8 562.8L1023.2 571.2L1031 581z" fill="#93714f"/><path d="M1031 581L1023.2 571.2L1012.7 579.7L1020.4 589.4z" fill="#8a6a4c"/><path d="M1033.8 562.8L1026.1 553.1L1015.5 561.5L1023.2 571.2z" fill="#8f6c4a"/><path d="M1023.2 571.2L1015.5 561.5L1004.9 569.9L1012.7 579.7z" fill="#856446"/><path d="M1026.1 553.1L1018.3 543.3L1007.8 551.8L1015.5 561.5z" fill="#856446"/><path d="M1015.5 561.5L1007.8 551.8L997.2 560.2L1004.9 569.9z" fill="#856446"/><path d="M1018.3 543.3L1010.6 533.6L1000 542L1007.8 551.8z" fill="#977553"/><path d="M1007.8 551.8L1000 542L989.4 550.4L997.2 560.2z" fill="#9c7b58"/></g><g opacity=".5"><path d="M1046.4 425.4L1037.1 414.1L1026.7 422.7L1036 434z" fill="#5d3d27"/><path d="M1036 434L1026.7 422.7L1016.2 431.2L1025.6 442.6z" fill="#a38160"/><path d="M1037.1 414.1L1027.8 402.8L1017.3 411.3L1026.7 422.7z" fill="#7d5d42"/><path d="M1026.7 422.7L1017.3 411.3L1006.9 419.9L1016.2 431.2z" fill="#977553"/><path d="M1027.8 402.8L1018.4 391.4L1008 400L1017.3 411.3z" fill="#5d3d27"/><path d="M1017.3 411.3L1008 400L997.6 408.6L1006.9 419.9z" fill="#977553"/></g><path d="M613.3 332.7L621.9 343L632.3 334.4L623.6 324z" fill="#8a6a4c"/><path d="M623.6 324L632.3 334.4L642.6 325.7L633.9 315.3z" fill="#80603f"/><path d="M621.9 343L630.6 353.4L641 344.7L632.3 334.4z" fill="#8f6c4a"/><path d="M632.3 334.4L641 344.7L651.3 336L642.6 325.7z" fill="#a38160"/><path d="M609.7 460.7L620.6 473.6L630.9 464.9L620 452z" fill="#8a6a4c"/><path d="M620 452L630.9 464.9L641.2 456.2L630.3 443.3z" fill="#6b4a31"/><path d="M964.2 623.9L1013.6 683.6L1034.4 666.4L985.1 606.7z" fill="#ff00ff"/><defs><pattern id="zf" width="3" height="8" patternUnits="userSpaceOnUse"><rect width="1.500" height="8" fill="#ff00ff"/></pattern></defs><path d="M889 661L925 665L922 669L906 679L896 670z" fill="url(#zf)"/><path d="M654 656L670 640L686 657L668 659z" fill="url(#zf)"/><path d="M1003 640L1022 650L1030 672L1012 682z" fill="url(#zf)" opacity=".55"/><polygon points="851.0,665.0 1007.0,490.0 1037.0,510.0 873.0,688.0" stroke="#1c1c1c" stroke-width=".8" fill="none"/><polygon points="849.6,657.2 999.3,489.2 1028.1,508.4 870.7,679.3" stroke="#1c1c1c" stroke-width=".8" fill="none"/><path d="M851.0 665.0L849.6 657.2M1007.0 490.0L999.3 489.2M1037.0 510.0L1028.1 508.4M873.0 688.0L870.7 679.3" stroke="#1c1c1c" stroke-width=".8" fill="none"/><path d="M862.0 676.5L1022.0 500.0" stroke="#1c1c1c" stroke-width=".8" fill="none"/></g><path d="M801 752L937 607M922 607H937V622" stroke="#1fe01f" stroke-width="1" fill="none"/><path d="M945 744L790 614M790 614l5 9M790 614l9 3" stroke="#1a1ad8" stroke-width="1" fill="none"/><path d="M852 647L893 728M893 728l-12-9M893 728l6 1" stroke="#e01414" stroke-width="1" fill="none"/><rect x="863" y="676" width="8" height="8" fill="#3a4a3c"/><path d="M1053 746L1048 822M1016 783.500L1090 788" stroke="#9a9a9a" stroke-width="2"/><path d="M1053 741l4 9.500h-8zM1047.500 829l-4-9.500h8zM1007.500 783l10-4v8zM1096.500 788.500l-10 4v-8z" fill="#45459a"/><text font-family="Liberation Sans,sans-serif" font-weight="bold" font-size="12.500" fill="#111" stroke="#111" stroke-width=".35" text-anchor="middle" transform="translate(1050 732) rotate(95)">W</text><text font-family="Liberation Sans,sans-serif" font-weight="bold" font-size="12.500" fill="#111" stroke="#111" stroke-width=".35" text-anchor="middle" transform="translate(992 781) rotate(95)">S</text><text font-family="Liberation Sans,sans-serif" font-weight="bold" font-size="12.500" fill="#111" stroke="#111" stroke-width=".35" text-anchor="middle" transform="translate(1103 789) rotate(95)">N</text><text font-family="Liberation Sans,sans-serif" font-weight="bold" font-size="12.500" fill="#111" stroke="#111" stroke-width=".35" text-anchor="middle" transform="translate(1043 835) rotate(95)">E</text></svg></div>
<div id="rp">
<svg width="0" height="0" style="position:absolute"><defs><symbol id="cube" viewBox="0 0 14 16"><path d="M7 0L14 3.6L7 7.4L0 3.6Z" fill="#3f6df2"/><path d="M0 3.6L7 7.4V16L0 12.2Z" fill="#ea333b"/><path d="M14 3.6L7 7.4V16L14 12.2Z" fill="#2eb24a"/><path d="M7 0L14 3.6L7 7.4L0 3.6Z" fill="none" stroke="#7fa0ff" stroke-width=".5"/></symbol><symbol id="exp" viewBox="0 0 10 10"><rect x=".5" y=".5" width="9" height="9" fill="#1c1c1c" stroke="#0a0a0a"/><path d="M2.5 5h5" stroke="#fff" stroke-width="1.4"/></symbol></defs></svg>
<div id="tree"></div>
<svg class="abs" style="left:0;top:0" width="241" height="302" viewBox="0 0 241 302"><path d="M23 9.5h7" stroke="#0d0d0d" stroke-width="1" stroke-dasharray="1 1"/><path d="M37.5 15v181" stroke="#0d0d0d" stroke-width="1" stroke-dasharray="1 1"/><path d="M43 26.5h8" stroke="#0d0d0d" stroke-width="1" stroke-dasharray="1 1"/><path d="M58 43.5h13" stroke="#0d0d0d" stroke-width="1" stroke-dasharray="1 1"/><path d="M58 60.5h13" stroke="#0d0d0d" stroke-width="1" stroke-dasharray="1 1"/><path d="M58 77.5h13" stroke="#0d0d0d" stroke-width="1" stroke-dasharray="1 1"/><path d="M58 94.5h13" stroke="#0d0d0d" stroke-width="1" stroke-dasharray="1 1"/><path d="M58 111.5h13" stroke="#0d0d0d" stroke-width="1" stroke-dasharray="1 1"/><path d="M43 128.5h8" stroke="#0d0d0d" stroke-width="1" stroke-dasharray="1 1"/><path d="M58 145.5h13" stroke="#0d0d0d" stroke-width="1" stroke-dasharray="1 1"/><path d="M58 162.5h13" stroke="#0d0d0d" stroke-width="1" stroke-dasharray="1 1"/><path d="M58 179.5h13" stroke="#0d0d0d" stroke-width="1" stroke-dasharray="1 1"/><path d="M43 196.5h8" stroke="#0d0d0d" stroke-width="1" stroke-dasharray="1 1"/><path d="M58 213.5h13" stroke="#0d0d0d" stroke-width="1" stroke-dasharray="1 1"/><path d="M58 230.5h13" stroke="#0d0d0d" stroke-width="1" stroke-dasharray="1 1"/><path d="M58 247.5h13" stroke="#0d0d0d" stroke-width="1" stroke-dasharray="1 1"/><path d="M58 264.5h13" stroke="#0d0d0d" stroke-width="1" stroke-dasharray="1 1"/><path d="M57.5 34v77" stroke="#0d0d0d" stroke-width="1" stroke-dasharray="1 1"/><path d="M57.5 136v43" stroke="#0d0d0d" stroke-width="1" stroke-dasharray="1 1"/><path d="M57.5 204v60" stroke="#0d0d0d" stroke-width="1" stroke-dasharray="1 1"/><rect x="88.5" y="256.5" width="79" height="16" fill="#222"/><use href="#exp" x="13" y="4" width="10" height="10"/><use href="#exp" x="33" y="21" width="10" height="10"/><use href="#cube" x="51" y="18" width="14" height="16"/><use href="#cube" x="71" y="35" width="14" height="16"/><use href="#cube" x="71" y="52" width="14" height="16"/><use href="#cube" x="71" y="69" width="14" height="16"/><use href="#cube" x="71" y="86" width="14" height="16"/><use href="#cube" x="71" y="103" width="14" height="16"/><use href="#exp" x="33" y="123" width="10" height="10"/><use href="#cube" x="51" y="120" width="14" height="16"/><use href="#cube" x="71" y="137" width="14" height="16"/><use href="#cube" x="71" y="154" width="14" height="16"/><use href="#cube" x="71" y="171" width="14" height="16"/><use href="#exp" x="33" y="191" width="10" height="10"/><use href="#cube" x="51" y="188" width="14" height="16"/><use href="#cube" x="71" y="205" width="14" height="16"/><use href="#cube" x="71" y="222" width="14" height="16"/><use href="#cube" x="71" y="239" width="14" height="16"/><use href="#cube" x="71" y="256" width="14" height="16"/></svg>
<div class="tr" style="left:30.5px;top:0px">Root</div>
<div class="tr" style="left:70px;top:17px">latticeleft1</div>
<div class="tr" style="left:90px;top:34px">latticeleft2</div>
<div class="tr" style="left:90px;top:51px">latticeleft3</div>
<div class="tr" style="left:90px;top:68px">latticeleft4</div>
<div class="tr" style="left:90px;top:85px">latticeleft5</div>
<div class="tr" style="left:90px;top:102px">latticeleft6</div>
<div class="tr" style="left:70px;top:119px">frameleft</div>
<div class="tr" style="left:90px;top:136px">frameright</div>
<div class="tr" style="left:90px;top:153px">frametop</div>
<div class="tr" style="left:90px;top:170px">framebottom</div>
<div class="tr" style="left:70px;top:187px">latticeright1</div>
<div class="tr" style="left:90px;top:204px">latticeright2</div>
<div class="tr" style="left:90px;top:221px">latticeright4</div>
<div class="tr" style="left:90px;top:238px">latticeright5</div>
<div class="tr" style="left:90px;top:255px">latticeright3</div>
<div class="abs" style="left:225px;top:0px;width:15px;height:346px;background:linear-gradient(90deg,#2e2e2e,#4a4a4a 50%,#3a3a3a);border:1px solid #555;box-shadow:0 0 0 1px #111"></div>
<div class="abs" style="left:229px;top:171px;width:7px;height:1px;background:#999;box-shadow:0 2px 0 #999,0 4px 0 #999"></div>
<div class="abs" style="left:225px;top:346px;width:16px;height:348px;background:#2f2f2f"></div>
<div class="btn" style="left:225px;top:694px;width:15px;height:15px;background:#3a3a3a"><svg class="abs" style="left:-1px;top:-1px" width="15" height="15"><path d="M4 9l3.5-3.5L11 9" fill="none" stroke="#ddd" stroke-width="1.8"/></svg></div>
<div class="btn" style="left:225px;top:710px;width:15px;height:15px;background:#3a3a3a"><svg class="abs" style="left:-1px;top:-1px" width="15" height="15"><path d="M4 6l3.5 3.5L11 6" fill="none" stroke="#ddd" stroke-width="1.8"/></svg></div>
<div class="btn" style="left:11px;top:306px;width:63px;height:29px"><svg class="abs" style="left:23px;top:4px" width="17" height="20"><use href="#cube" width="17" height="20"/></svg></div>
<div class="btn" style="left:79px;top:306px;width:64px;height:29px"><svg class="abs" style="left:22px;top:4px" width="20" height="20" viewBox="0 0 20 20"><path d="M3 5h14l-1.6 13a1.5 1.5 0 0 1-1.5 1.3H6.1A1.5 1.5 0 0 1 4.6 18z" fill="#8e8e8e"/><ellipse cx="10" cy="5" rx="8" ry="2.6" fill="#c4c4c4" stroke="#777" stroke-width=".6"/><ellipse cx="10" cy="5.2" rx="6" ry="1.5" fill="#4c4c4c"/><path d="M7 8v9M10 8v9M13 8v9" stroke="#6a6a6a" stroke-width="1"/></svg></div>
<div class="btn" style="left:148px;top:306px;width:64px;height:29px"><svg class="abs" style="left:21px;top:3px" width="22" height="22" viewBox="0 0 22 22"><path d="M2 1h8l3 3v10H2z" fill="#f4f4f4" stroke="#bdbdbd" stroke-width=".6"/><path d="M9 7h8l3 3v10H9z" fill="#fafafa" stroke="#bdbdbd" stroke-width=".6"/></svg></div>
<div class="abs" style="left:9px;top:342px;width:205px;height:25px;background:#2c2c2c;border:1px solid #0e0e0e"></div>
<div class="lbl" style="left:11px;top:346px;color:#e9e3d6">latticeright3</div>
<div class="tab" style="left:16px;width:45px;top:387px">Cube</div>
<div class="tab on" style="left:62px;width:41px;top:386px">Face</div>
<div class="tab" style="left:104px;width:72px;top:387px">Keyframe</div>
<div class="tab" style="left:177px;width:22px;top:387px">P</div>
<div class="abs" style="left:10px;top:408px;width:204px;height:2px;background:#3a3a3a;border-bottom:1px solid #0e0e0e"></div>
<div class="abs" style="left:10px;top:410px;width:1px;height:320px;background:#333"></div><div class="abs" style="left:213px;top:410px;width:1px;height:320px;background:#333"></div>
<div class="lbl" style="left:25px;top:417px">Side</div>
<div class="abs" style="left:22px;top:436px;width:178px;height:27px;background:#414141;border:1px solid #0c0c0c"></div>
<div class="lbl" style="left:30px;top:441px;color:#2f5632;text-shadow:none">Down</div>
<div class="btn" style="left:176px;top:438px;width:23px;height:23px;box-shadow:none"><svg class="abs" style="left:5px;top:6px" width="12" height="10"><path d="M2.5 2.5L6 6L9.5 2.5" fill="none" stroke="#ddd" stroke-width="2"/></svg></div>
<div class="lbl" style="left:25px;top:467px">Texture</div>
<div class="btn" style="left:22px;top:486px;width:86px;height:29px"><svg class="abs" style="left:10px;top:6px" width="16" height="15" viewBox="0 0 16 15"><rect x=".7" y=".7" width="14.6" height="13.6" fill="#bfe0f5" stroke="#d9813a" stroke-width="1.4"/><path d="M1.5 13.5V9l4-3 4 3 5-2v6.5z" fill="#7da345"/><path d="M1.5 13.5l5-3 8 1v2z" fill="#e9d27a"/></svg><div class="lbl" style="left:31px;top:5px;font-size:15px;line-height:17px;color:#f4f4f4;margin-top:0;letter-spacing:0px">Image</div></div>
<div class="btn" style="left:113px;top:486px;width:86px;height:29px"><svg class="abs" style="left:14px;top:4px" width="20" height="20" viewBox="0 0 20 20"><path d="M6.2 1h7.6L19 6.2v7.6L13.8 19H6.2L1 13.8V6.2z" fill="#e5433e" stroke="#f08a86" stroke-width="1"/><path d="M6.5 6.5l7 7M13.5 6.5l-7 7" stroke="#fff" stroke-width="2.6"/></svg><div class="lbl" style="left:37px;top:5px;font-size:15px;line-height:17px;color:#f4f4f4;margin-top:0;letter-spacing:-0.55px">Clear</div></div>
<div class="btn" style="left:22px;top:521px;width:86px;height:29px"><svg class="abs" style="left:13px;top:4px" width="21" height="21" viewBox="0 0 21 21"><path d="M1 1h8l3 3v9H1z" fill="#f2f2f2" stroke="#bbb" stroke-width=".6"/><path d="M8 7h8l3 3v10H8z" fill="#fafafa" stroke="#bbb" stroke-width=".6"/></svg><div class="lbl" style="left:37.5px;top:5px;font-size:15px;line-height:17px;color:#f4f4f4;margin-top:0;letter-spacing:-0.8px">Copy</div></div>
<div class="btn" style="left:113px;top:521px;width:86px;height:29px"><svg class="abs" style="left:11px;top:3px" width="21" height="22" viewBox="0 0 21 22"><rect x="1" y="3" width="14" height="16" rx="1" fill="#b98d5a" stroke="#8a6438" stroke-width=".6"/><rect x="5" y="1" width="6" height="4" rx="1" fill="#c9c9c9" stroke="#888" stroke-width=".5"/><path d="M8 8h8l3 3v10H8z" fill="#f7f7f7" stroke="#bbb" stroke-width=".6"/></svg><div class="lbl" style="left:35px;top:5px;font-size:15px;line-height:17px;color:#f4f4f4;margin-top:0;letter-spacing:-0.35px">Paste</div></div>
<div class="lbl" style="left:25px;top:557px">Face UV</div>
<div class="btn" style="left:23px;top:576px;width:40px;height:29px"><svg class="abs" style="left:9px;top:7px" width="20" height="13"><path d="M10 0L20 12H0z" fill="#fff"/></svg></div>
<div class="btn" style="left:23px;top:646px;width:40px;height:29px"><svg class="abs" style="left:9px;top:9px" width="20" height="13"><path d="M10 12L20 0H0z" fill="#fff"/></svg></div>
<div class="btn" style="left:68px;top:576px;width:40px;height:29px"><svg class="abs" style="left:9px;top:7px" width="20" height="13"><path d="M10 0L20 12H0z" fill="#fff"/></svg></div>
<div class="btn" style="left:68px;top:646px;width:40px;height:29px"><svg class="abs" style="left:9px;top:9px" width="20" height="13"><path d="M10 12L20 0H0z" fill="#fff"/></svg></div>
<div class="btn" style="left:113px;top:576px;width:40px;height:29px"><svg class="abs" style="left:9px;top:7px" width="20" height="13"><path d="M10 0L20 12H0z" fill="#fff"/></svg></div>
<div class="btn" style="left:113px;top:646px;width:40px;height:29px"><svg class="abs" style="left:9px;top:9px" width="20" height="13"><path d="M10 12L20 0H0z" fill="#fff"/></svg></div>
<div class="btn" style="left:158px;top:576px;width:40px;height:29px"><svg class="abs" style="left:9px;top:7px" width="20" height="13"><path d="M10 0L20 12H0z" fill="#fff"/></svg></div>
<div class="btn" style="left:158px;top:646px;width:40px;height:29px"><svg class="abs" style="left:9px;top:9px" width="20" height="13"><path d="M10 12L20 0H0z" fill="#fff"/></svg></div>
<div class="num" style="left:22px;top:611px;width:42px;height:31px">0</div>
<div class="num" style="left:67px;top:611px;width:42px;height:31px">0</div>
<div class="num" style="left:112px;top:611px;width:42px;height:31px">1</div>
<div class="num" style="left:157px;top:611px;width:42px;height:31px">1</div>
<div class="lbl" style="left:23px;top:681px">Rotation</div>
<div class="abs" style="left:39px;top:710px;width:149px;height:11px;background:#262626;border:1px solid #0a0a0a;border-bottom-color:#3a3a3a"></div>
<svg class="abs" style="left:26px;top:705px" width="15" height="22" viewBox="0 0 15 22"><path d="M1.5 1h12v5l-1 0v9l-5 6-5-6V6l-1 0z" fill="#555"/><path d="M3 2h9v13l-4.5 5.5L3 15z" fill="#e8e8ec"/><path d="M8 2h4v13l-4 5z" fill="#b9b9c2"/><rect x="1.5" y="1" width="12" height="4" fill="#666" opacity=".8"/></svg>
</div></div>
<div id="tb">
<svg class="abs" style="left:4px;top:4px" width="32" height="32" viewBox="0 0 32 32"><rect width="32" height="32" fill="#fff"/><circle cx="16" cy="15.5" r="15" fill="#0a0a0a"/><path d="M8 9c2-4 14-4 16 0c1 5 0 10-3 15l-5 6l-5-6C8 19 7 14 8 9z" fill="#f4f4f4"/><path d="M9.5 12.5c2-1.6 4-1.4 5.5 0c-2 .9-3.6.9-5.500 0zM17 12.500c1.500-1.400 3.500-1.600 5.500 0c-1.900.9-3.500.9-5.500 0z" fill="#111"/><path d="M10 19c3 1.500 4.500-.5 6 .4c1.500-.9 3 1.100 6-.4c-2 2.600-4 1.600-6 1.300c-2 .300-4 1.300-6-1.300z" fill="#222"/><path d="M15 14v4.500h2M14.800 23.500l1.200 4l1.200-4z" stroke="#333" stroke-width=".7" fill="#333"/><path d="M9 16c1 .8 2 1 3 .8M23 16c-1 .8-2 1-3 .8" stroke="#d39a9a" stroke-width="1" fill="none"/></svg>
<div class="abs" style="left:48px;top:4px;width:1px;height:34px;background:#3e3e3e"></div>
<div class="abs" style="left:321px;top:0px;width:38px;height:40px;background:#6a6a6a"></div>
<div class="ul" style="left:57px;width:38px"></div><div class="ul" style="left:101px;width:38px"></div><div class="ul" style="left:145px;width:38px"></div><div class="ul" style="left:189px;width:38px"></div><div class="ul" style="left:233px;width:38px"></div><div class="ul" style="left:277px;width:38px"></div><div class="ul" style="left:321px;width:38px"></div><div class="ul" style="left:365px;width:38px"></div>
<!-- files -->
<svg class="abs" style="left:57px;top:-1px" width="38" height="36" viewBox="0 0 38 36"><path d="M6 12.500h26v4H6z" fill="#f4f4f4"/><path d="M5 15h28v18H5z" fill="url(#gFol)"/><circle cx="11" cy="9.500" r="10" fill="#454545"/><text x="11" y="15" font-family="Liberation Sans,sans-serif" font-size="14" fill="#e8e8e8" text-anchor="middle">2</text></svg>
<!-- firefox -->
<svg class="abs" style="left:105px;top:4px" width="30" height="30" viewBox="0 0 30 30"><defs><radialGradient id="gGl" cx=".4" cy=".3" r=".8"><stop offset="0" stop-color="#6fc4ee"/><stop offset=".55" stop-color="#2f7fd0"/><stop offset="1" stop-color="#1d3a9c"/></radialGradient><linearGradient id="gFx" x1="0" y1="0" x2="1" y2="1"><stop offset="0" stop-color="#f0a22a"/><stop offset=".5" stop-color="#ee7a1a"/><stop offset="1" stop-color="#f6c21c"/></linearGradient></defs><rect x="1" y="1" width="28" height="28" rx="4" fill="url(#gFx)"/><circle cx="16" cy="13.500" r="11.500" fill="url(#gGl)"/><path d="M11 5c3-2 6-2 8-1c-1 1-1 2 0 3c2 0 3 1 2 3c-2 1-3 0-5-1c-1 1-3 1-4-1c-1-1-1-2-1-3z" fill="#9fd8f2" opacity=".9"/><path d="M19 13c2 0 4 1 4 3c-1 2-3 2-4 0z" fill="#8fd0ee" opacity=".7"/><path d="M2 10c1-3 3-6 6-7c-1 2-1 3 0 4c2 0 4 1 4 3c0 3-3 3-3 6c0 3 3 5 7 5c5 0 8-3 9-8c1 2 2 4 3 3c0 8-5 13-12 13C8 29 1 23 1 15c0-2 0-3 1-5z" fill="#f08a1c"/><path d="M2 10c1-3 3-6 6-7c-1 2-1 3 0 4c2 0 4 1 4 3c-3-1-5 0-6 3c-1-1-3-2-4-3z" fill="#f7b52c"/><path d="M8 17c0 3 3 5 7 5c3 0 6-1 8-4c-1 5-4 8-9 8c-5 0-8-4-6-9z" fill="#d9461a"/><path d="M28 14c1 7-3 14-11 15c6-2 9-7 9-13z" fill="#f9d43a"/></svg>
<!-- terminal -->
<svg class="abs" style="left:150px;top:5px" width="28" height="29" viewBox="0 0 28 29"><defs><radialGradient id="gTm" cx=".5" cy="1" r=".7"><stop offset="0" stop-color="#3a3140"/><stop offset="1" stop-color="#1d1b20"/></radialGradient></defs><rect x="1.500" y="1.500" width="25" height="26" rx="2.500" fill="url(#gTm)" stroke="#c6c6c6" stroke-width="3"/><rect x=".5" y=".5" width="27" height="28" rx="3" fill="none" stroke="#8e8e8e" stroke-width=".8"/><text x="5.500" y="13.500" font-family="Liberation Mono,monospace" font-weight="bold" font-size="9" fill="#fafafa">&gt;_</text></svg>
<!-- teams -->
<svg class="abs" style="left:191px;top:3px" width="34" height="34" viewBox="0 0 34 34"><rect x="1" y="1" width="25" height="24" rx="3" fill="#4b53bc" stroke="#7b83e0" stroke-width=".8"/><text x="13" y="20.500" font-family="Liberation Sans,sans-serif" font-weight="bold" font-size="19.500" fill="#fff" text-anchor="middle">T</text><path d="M22.500 12c2.500 0 3.500 2.500 3.500 5c0 3 4 7 4 11c0 2-2 3-2 3h-11s-2-1-2-3c0-4 4-8 4-11c0-2.500 1-5 3.500-5z" fill="#f6f6f6" stroke="#f6f6f6" stroke-width="2.200"/><path d="M22.500 12c2.500 0 3.500 2.500 3.500 5c0 3 4 7 4 11c0 2-2 3-2 3h-11s-2-1-2-3c0-4 4-8 4-11c0-2.500 1-5 3.500-5z" fill="#f6f6f6" stroke="#23276e" stroke-width="1.400"/><path d="M22.500 12.500c2 0 3 2 3 4.500c-1-1-2-1.500-3-1.500s-2 .5-3 1.500c0-2.500 1-4.500 3-4.500z" fill="#23276e"/><path d="M19 20c-1 3-2 5-2 8M26 20c1 3 2 5 2 8" stroke="#2a2f80" stroke-width="1" fill="none"/><path d="M13 32.500l5-2.500l1.500 3zM32 32.500l-5-2.500l-1.500 3z" fill="#f6f6f6" stroke="#2a2f80" stroke-width=".8"/></svg>
<!-- text editor -->
<svg class="abs" style="left:237px;top:2px" width="32" height="33" viewBox="0 0 32 33"><rect x="1" y="5" width="27" height="27" rx="2.500" fill="#ececec" stroke="#c5c5c5"/><path d="M4 13h20M4 17h20M4 21h18M4 25h16" stroke="#b9c9dc" stroke-width="1.100" stroke-dasharray="4 1 3 1 2 1"/><path d="M5 7v2M9 7v2M13 7v2M17 7v2M21 7v2" stroke="#1a1a1a" stroke-width="2" stroke-linecap="round"/><path d="M22.500 3.500l3.500 2.500l-13 19.500l-4 2l.5-4.500z" fill="#f1b02f" stroke="#a66d12" stroke-width=".7"/><path d="M22.500 3.500l1.300-2l3.500 2.500l-1.300 2z" fill="#e2625c"/><path d="M9 27.500l.3-2.500l2 1.300z" fill="#333"/></svg>
<!-- vscode -->
<svg class="abs" style="left:281px;top:4px" width="30" height="30" viewBox="0 0 30 30"><path d="M21 1l8 3.500v21L21 29L6 16z" fill="#1f9cf0"/><path d="M21 1L6 16l15 13v-6.500L12.500 15L21 8z" fill="#0065a9"/><path d="M3 9.500l3-1.500l8 7l-8 7l-3-1.500L8.500 15z" fill="#007acc"/><path d="M21 8v14.500L12.500 15z" fill="#2e2e2e"/></svg>
<!-- active app -->
<svg class="abs" style="left:326px;top:5px" width="28" height="29" viewBox="0 0 28 29"><rect x=".5" y=".5" width="27" height="28" rx="3" fill="url(#gDoc)" stroke="#d9d9d9"/><circle cx="8" cy="22" r="6.500" fill="none" stroke="#dedede" stroke-width="2"/><circle cx="8" cy="22" r="8.500" fill="none" stroke="#e0e0e0" stroke-width="2" stroke-dasharray="1.500 1.500"/><circle cx="7" cy="8" r="4" fill="none" stroke="#e2e2e2" stroke-width="2.500" stroke-dasharray="1.600 1.300"/><circle cx="21" cy="6" r="3" fill="#e0e0e0"/><path d="M15.500 14c1-4.500 10-4.500 11 0z" fill="#dedede"/><path d="M14 16.500h13" stroke="#dedede" stroke-width="1.500" stroke-dasharray="1.500 1"/></svg>
<!-- discord -->
<svg class="abs" style="left:369px;top:4px" width="30" height="30" viewBox="0 0 30 30"><circle cx="15" cy="15" r="15" fill="#5865f2"/><g transform="translate(15 15.500) scale(1.220) translate(-15 -15.300)"><path fill="#e3e6ff" d="M9.500 9.500c1.500-.8 3-1.200 3.500-1.200l.4.800c1-.1 2.200-.1 3.200 0l.4-.8c.5 0 2 .4 3.500 1.200c2 3 2.800 6.500 2.500 10c-1.500 1.100-3 1.700-4 2l-.9-1.400c.5-.2 1-.5 1.400-.8c-2.800 1.300-6.200 1.300-9 0c.4.300.9.600 1.400.8l-.9 1.400c-1-.3-2.500-.9-4-2c-.3-3.500.5-7 2.500-10z"/><ellipse cx="12.300" cy="15.800" rx="1.700" ry="1.900" fill="#5865f2"/><ellipse cx="17.700" cy="15.800" rx="1.700" ry="1.900" fill="#5865f2"/></g></svg>
<!-- tray -->
<svg class="abs" style="left:1656px;top:11px" width="20" height="18" viewBox="0 0 20 18"><path d="M2 4v8M2 14v2" stroke="#e8e8e8" stroke-width="1.600"/><path d="M6 4v12M9.500 7v9M13 8v8M16.500 8v8" stroke="#d8d8d8" stroke-width="1.600"/><rect x="10" y="1" width="8" height="6" rx="1" fill="#2e2e2e" stroke="#cfcfcf" stroke-width="1.200"/></svg>
<svg class="abs" style="left:1687px;top:7px" width="26" height="26" viewBox="0 0 34 34"><rect x="1" y="1" width="25" height="24" rx="3" fill="#4b53bc" stroke="#7b83e0" stroke-width=".8"/><text x="13" y="20.500" font-family="Liberation Sans,sans-serif" font-weight="bold" font-size="19.500" fill="#fff" text-anchor="middle">T</text><path d="M22.500 12c2.500 0 3.500 2.500 3.500 5c0 3 4 7 4 11c0 2-2 3-2 3h-11s-2-1-2-3c0-4 4-8 4-11c0-2.500 1-5 3.500-5z" fill="#f6f6f6" stroke="#f6f6f6" stroke-width="2.200"/><path d="M22.500 12c2.500 0 3.500 2.500 3.500 5c0 3 4 7 4 11c0 2-2 3-2 3h-11s-2-1-2-3c0-4 4-8 4-11c0-2.500 1-5 3.500-5z" fill="#f6f6f6" stroke="#23276e" stroke-width="1.400"/><path d="M22.500 12.500c2 0 3 2 3 4.500c-1-1-2-1.500-3-1.500s-2 .5-3 1.500c0-2.500 1-4.500 3-4.500z" fill="#23276e"/></svg>
<svg class="abs" style="left:1719px;top:8px" width="26" height="24" viewBox="0 0 26 24"><path d="M5.500 6.500c2-1 4-1.500 4.700-1.500l.5 1c1.400-.2 3-.2 4.400 0l.5-1c.7 0 2.700.5 4.700 1.500c2.700 4 3.700 8.500 3.300 13c-2 1.500-4 2.200-5.300 2.600l-1.200-1.800c.7-.3 1.300-.6 1.900-1c-3.700 1.700-8.300 1.700-12 0c.6.400 1.200.7 1.900 1L7.700 22c-1.300-.4-3.300-1.100-5.300-2.600c-.4-4.500.6-9 3.100-12.900z" fill="#fff"/><ellipse cx="9.400" cy="14.700" rx="2.200" ry="2.500" fill="#2e2e2e"/><ellipse cx="16.600" cy="14.700" rx="2.200" ry="2.500" fill="#2e2e2e"/><circle cx="20.500" cy="4.500" r="3.600" fill="#e6323f"/></svg>
<svg class="abs" style="left:1751px;top:10px" width="20" height="20" viewBox="0 0 20 20"><path d="M9 1l7.500 3c0 6-2 10.500-7.500 14C3.500 14.500 1.500 10 1.500 4z" fill="none" stroke="#eee" stroke-width="1.600"/><path d="M9 4.500l4.500 1.800c0 3.700-1.300 6.500-4.500 8.700z" fill="#bdbdbd"/><circle cx="15.500" cy="15.500" r="3.200" fill="#f07c2a"/></svg>
<svg class="abs" style="left:1778px;top:11px" width="18" height="16" viewBox="0 0 18 16"><rect x="1" y="1" width="16" height="13.500" rx="2" fill="none" stroke="#f2f2f2" stroke-width="1.800"/><path d="M4 11.200h10" stroke="#f2f2f2" stroke-width="1.500"/></svg>
<svg class="abs" style="left:1804px;top:12px" width="18" height="14" viewBox="0 0 18 14"><path d="M1.500 5a10.500 10.500 0 0 1 15 0" fill="none" stroke="#f2f2f2" stroke-width="1.700"/><path d="M4 8a7 7 0 0 1 10 0" fill="none" stroke="#f2f2f2" stroke-width="1.700"/><path d="M6.500 10.800a3.500 3.500 0 0 1 5 0" fill="none" stroke="#f2f2f2" stroke-width="1.600"/><circle cx="9" cy="12.600" r="1.100" fill="#f2f2f2"/></svg>
<svg class="abs" style="left:1832px;top:8px" width="16" height="22" viewBox="0 0 16 22"><path d="M8 2v14" stroke="#f2f2f2" stroke-width="1.700"/><path d="M8 2c1 3.500 5 4 4.500 8" fill="none" stroke="#f2f2f2" stroke-width="1.700"/><ellipse cx="5" cy="16.800" rx="3.600" ry="2.900" fill="#f2f2f2"/></svg>
<div class="abs" style="left:1857px;top:12px;font-size:13.500px;line-height:16px;color:#eef2f6;white-space:nowrap;letter-spacing:-.15px;-webkit-text-stroke:.25px #eef2f6">1:58 PM</div>
<div class="abs" style="left:1911px;top:4px;width:9px;height:38px;background:#3d3d3d"></div>
</div>
</body></html>
